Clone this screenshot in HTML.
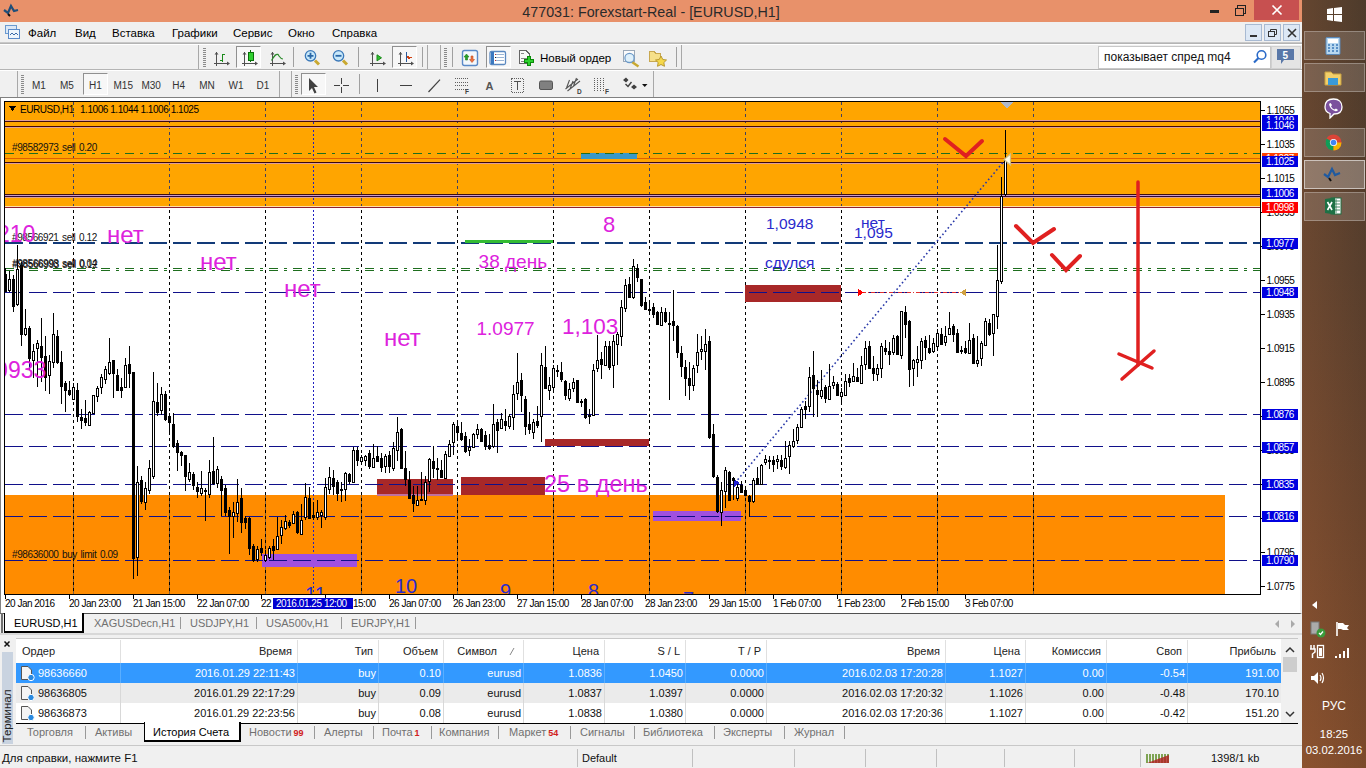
<!DOCTYPE html><html><head><meta charset="utf-8"><style>
*{margin:0;padding:0;box-sizing:border-box}
body{width:1366px;height:768px;overflow:hidden;background:#f0f0f0;font-family:"Liberation Sans",sans-serif;position:relative;color:#000}
.a{position:absolute}
.t{position:absolute;white-space:nowrap}
</style></head><body><div class="a" style="left:0;top:0;width:1302px;height:22px;background:#e8916a"></div>
<div class="t" style="left:0;top:1px;width:1302px;text-align:center;font-size:14.3px;line-height:22px;color:#2a2a2a">477031: Forexstart-Real - [EURUSD,H1]</div>
<svg class="a" style="left:2px;top:2px" width="18" height="16"><path d="M2 8 L6 11 L9 4 L12 9 L16 8" stroke="#1f4e79" stroke-width="2.2" fill="none"/><path d="M6 12 L8 14" stroke="#111" stroke-width="2"/></svg>
<div class="a" style="left:1210px;top:10px;width:9px;height:3px;background:#222"></div>
<svg class="a" style="left:1233px;top:3px" width="14" height="14" shape-rendering="crispEdges"><rect x="2.5" y="5.5" width="8" height="7" fill="none" stroke="#222" stroke-width="1.4"/><path d="M4.5 5 V2.5 H12.5 V10.5 H11" fill="none" stroke="#222" stroke-width="1.4"/></svg>
<div class="a" style="left:1254px;top:0;width:45px;height:20px;background:#c75050"></div>
<svg class="a" style="left:1271px;top:4px" width="12" height="12"><path d="M1.5 1.5 L10.5 10.5 M10.5 1.5 L1.5 10.5" stroke="#fff" stroke-width="1.7"/></svg>
<div class="a" style="left:0;top:22px;width:1302px;height:21px;background:#f0f0f0;border-bottom:1px solid #c8c8c8"></div>
<svg class="a" style="left:4px;top:24px" width="16" height="16"><rect x="1.5" y="1.5" width="11" height="8" fill="#dbe8f6" stroke="#6a9ad0"/><rect x="4.5" y="5.5" width="11" height="9" fill="#eef5fc" stroke="#5a8ac8"/><path d="M6 11 l2 -2 l2 2 l2 -2 l2 2" stroke="#3a6aa8" fill="none"/></svg>
<div class="t" style="left:28px;top:26px;font-size:11.5px;line-height:15px;color:#000">Файл</div>
<div class="t" style="left:75px;top:26px;font-size:11.5px;line-height:15px;color:#000">Вид</div>
<div class="t" style="left:112px;top:26px;font-size:11.5px;line-height:15px;color:#000">Вставка</div>
<div class="t" style="left:172px;top:26px;font-size:11.5px;line-height:15px;color:#000">Графики</div>
<div class="t" style="left:233px;top:26px;font-size:11.5px;line-height:15px;color:#000">Сервис</div>
<div class="t" style="left:288px;top:26px;font-size:11.5px;line-height:15px;color:#000">Окно</div>
<div class="t" style="left:332px;top:26px;font-size:11.5px;line-height:15px;color:#000">Справка</div>
<div class="a" style="left:1245px;top:24px;width:17px;height:17px;background:#dde8f5;border:1px solid #a8bad2"></div>
<div class="a" style="left:1264px;top:24px;width:17px;height:17px;background:#dde8f5;border:1px solid #a8bad2"></div>
<div class="a" style="left:1283px;top:24px;width:17px;height:17px;background:#dde8f5;border:1px solid #a8bad2"></div>
<div class="a" style="left:1250px;top:35px;width:7px;height:2px;background:#333"></div>
<svg class="a" style="left:1267px;top:27px" width="12" height="11"><rect x="1.5" y="4.5" width="6" height="5" fill="none" stroke="#333"/><path d="M3.5 4.5 V2.5 H9.5 V7.5 H7.5" fill="none" stroke="#333"/></svg>
<svg class="a" style="left:1287px;top:28px" width="10" height="10"><path d="M1 1 L9 9 M9 1 L1 9" stroke="#333" stroke-width="1.6"/></svg>
<div class="a" style="left:0;top:43px;width:1302px;height:55px;background:#f0f0f0"></div>
<div class="a" style="left:0;top:43px;width:1302px;height:1px;background:#b4b4b4"></div>
<div class="a" style="left:0;top:44px;width:1302px;height:1px;background:#fff"></div>
<div class="a" style="left:0;top:69px;width:1302px;height:1px;background:#b4b4b4"></div>
<div class="a" style="left:0;top:70px;width:1302px;height:1px;background:#fff"></div>
<div class="a" style="left:0;top:97px;width:1302px;height:2px;background:#808080"></div>
<div class="a" style="left:198px;top:45px;width:1px;height:24px;background:#a8a8a8"></div>
<div class="a" style="left:427px;top:45px;width:1px;height:24px;background:#a8a8a8"></div>
<div class="a" style="left:440px;top:45px;width:1px;height:24px;background:#a8a8a8"></div>
<div class="a" style="left:681px;top:45px;width:1px;height:24px;background:#a8a8a8"></div>
<div class="a" style="left:17px;top:71px;width:1px;height:26px;background:#a8a8a8"></div>
<div class="a" style="left:279px;top:71px;width:1px;height:26px;background:#a8a8a8"></div>
<div class="a" style="left:291px;top:71px;width:1px;height:26px;background:#a8a8a8"></div>
<div class="a" style="left:653px;top:71px;width:1px;height:26px;background:#a8a8a8"></div>
<div class="a" style="left:236px;top:46px;width:25px;height:22px;background:#f7f7f7;border-left:1px solid #909090;border-top:1px solid #909090;border-right:1px solid #fff;border-bottom:1px solid #fff"></div>
<div class="a" style="left:392px;top:46px;width:25px;height:22px;background:#f7f7f7;border-left:1px solid #909090;border-top:1px solid #909090;border-right:1px solid #fff;border-bottom:1px solid #fff"></div>
<div class="a" style="left:486px;top:46px;width:25px;height:22px;background:#f7f7f7;border-left:1px solid #909090;border-top:1px solid #909090;border-right:1px solid #fff;border-bottom:1px solid #fff"></div>
<div class="a" style="left:83px;top:73px;width:25px;height:22px;background:#f7f7f7;border-left:1px solid #909090;border-top:1px solid #909090;border-right:1px solid #fff;border-bottom:1px solid #fff"></div>
<div class="a" style="left:301px;top:73px;width:25px;height:22px;background:#f7f7f7;border-left:1px solid #909090;border-top:1px solid #909090;border-right:1px solid #fff;border-bottom:1px solid #fff"></div>
<div class="t" style="left:26.6px;top:80px;width:24.5px;text-align:center;font-size:10px;line-height:12px;color:#333">M1</div>
<div class="t" style="left:54.5px;top:80px;width:24.799999999999997px;text-align:center;font-size:10px;line-height:12px;color:#333">M5</div>
<div class="t" style="left:83.7px;top:80px;width:23.299999999999997px;text-align:center;font-size:10px;line-height:12px;color:#333">H1</div>
<div class="t" style="left:108.3px;top:80px;width:29.89999999999999px;text-align:center;font-size:10px;line-height:12px;color:#333">M15</div>
<div class="t" style="left:136.3px;top:80px;width:29.799999999999983px;text-align:center;font-size:10px;line-height:12px;color:#333">M30</div>
<div class="t" style="left:166.2px;top:80px;width:24.900000000000006px;text-align:center;font-size:10px;line-height:12px;color:#333">H4</div>
<div class="t" style="left:193.7px;top:80px;width:26.700000000000017px;text-align:center;font-size:10px;line-height:12px;color:#333">MN</div>
<div class="t" style="left:223px;top:80px;width:26px;text-align:center;font-size:10px;line-height:12px;color:#333">W1</div>
<div class="t" style="left:251px;top:80px;width:23.80000000000001px;text-align:center;font-size:10px;line-height:12px;color:#333">D1</div>
<div class="t" style="left:540px;top:50px;font-size:11.6px;line-height:15px;color:#000">Новый ордер</div>
<svg class="a" style="left:0;top:0" width="700" height="100" shape-rendering="crispEdges">
<rect x="203" y="48" width="3" height="1" fill="#8a8a8a"/>
<rect x="203" y="50" width="3" height="1" fill="#8a8a8a"/>
<rect x="203" y="52" width="3" height="1" fill="#8a8a8a"/>
<rect x="203" y="54" width="3" height="1" fill="#8a8a8a"/>
<rect x="203" y="56" width="3" height="1" fill="#8a8a8a"/>
<rect x="203" y="58" width="3" height="1" fill="#8a8a8a"/>
<rect x="203" y="60" width="3" height="1" fill="#8a8a8a"/>
<rect x="203" y="62" width="3" height="1" fill="#8a8a8a"/>
<rect x="203" y="64" width="3" height="1" fill="#8a8a8a"/>
<rect x="203" y="66" width="3" height="1" fill="#8a8a8a"/>
<rect x="444" y="48" width="3" height="1" fill="#8a8a8a"/>
<rect x="444" y="50" width="3" height="1" fill="#8a8a8a"/>
<rect x="444" y="52" width="3" height="1" fill="#8a8a8a"/>
<rect x="444" y="54" width="3" height="1" fill="#8a8a8a"/>
<rect x="444" y="56" width="3" height="1" fill="#8a8a8a"/>
<rect x="444" y="58" width="3" height="1" fill="#8a8a8a"/>
<rect x="444" y="60" width="3" height="1" fill="#8a8a8a"/>
<rect x="444" y="62" width="3" height="1" fill="#8a8a8a"/>
<rect x="444" y="64" width="3" height="1" fill="#8a8a8a"/>
<rect x="444" y="66" width="3" height="1" fill="#8a8a8a"/>
<rect x="21" y="75" width="3" height="1" fill="#8a8a8a"/>
<rect x="21" y="77" width="3" height="1" fill="#8a8a8a"/>
<rect x="21" y="79" width="3" height="1" fill="#8a8a8a"/>
<rect x="21" y="81" width="3" height="1" fill="#8a8a8a"/>
<rect x="21" y="83" width="3" height="1" fill="#8a8a8a"/>
<rect x="21" y="85" width="3" height="1" fill="#8a8a8a"/>
<rect x="21" y="87" width="3" height="1" fill="#8a8a8a"/>
<rect x="21" y="89" width="3" height="1" fill="#8a8a8a"/>
<rect x="21" y="91" width="3" height="1" fill="#8a8a8a"/>
<rect x="21" y="93" width="3" height="1" fill="#8a8a8a"/>
<rect x="295" y="75" width="3" height="1" fill="#8a8a8a"/>
<rect x="295" y="77" width="3" height="1" fill="#8a8a8a"/>
<rect x="295" y="79" width="3" height="1" fill="#8a8a8a"/>
<rect x="295" y="81" width="3" height="1" fill="#8a8a8a"/>
<rect x="295" y="83" width="3" height="1" fill="#8a8a8a"/>
<rect x="295" y="85" width="3" height="1" fill="#8a8a8a"/>
<rect x="295" y="87" width="3" height="1" fill="#8a8a8a"/>
<rect x="295" y="89" width="3" height="1" fill="#8a8a8a"/>
<rect x="295" y="91" width="3" height="1" fill="#8a8a8a"/>
<rect x="295" y="93" width="3" height="1" fill="#8a8a8a"/>
<line x1="293.5" y1="47" x2="293.5" y2="67" stroke="#a0a0a0"/>
<line x1="358.5" y1="47" x2="358.5" y2="67" stroke="#a0a0a0"/>
<line x1="422.5" y1="47" x2="422.5" y2="67" stroke="#a0a0a0"/>
<line x1="452.5" y1="47" x2="452.5" y2="67" stroke="#a0a0a0"/>
<line x1="676.5" y1="47" x2="676.5" y2="67" stroke="#a0a0a0"/>
<line x1="359.5" y1="74" x2="359.5" y2="94" stroke="#a0a0a0"/>
<path d="M216.5 52 V66 M214 63.5 H229" stroke="#505050" stroke-width="1.2"/>
<path d="M214.5 54.5 L216.5 52 L218.5 54.5 Z M227 61.5 L230 63.5 L227 65.5 Z" fill="#505050" shape-rendering="auto"/>
<path d="M244.5 52 V66 M242 63.5 H257" stroke="#505050" stroke-width="1.2"/>
<path d="M242.5 54.5 L244.5 52 L246.5 54.5 Z M255 61.5 L258 63.5 L255 65.5 Z" fill="#505050" shape-rendering="auto"/>
<path d="M272.5 52 V66 M270 63.5 H285" stroke="#505050" stroke-width="1.2"/>
<path d="M270.5 54.5 L272.5 52 L274.5 54.5 Z M283 61.5 L286 63.5 L283 65.5 Z" fill="#505050" shape-rendering="auto"/>
<path d="M372.5 52 V66 M370 63.5 H385" stroke="#505050" stroke-width="1.2"/>
<path d="M370.5 54.5 L372.5 52 L374.5 54.5 Z M383 61.5 L386 63.5 L383 65.5 Z" fill="#505050" shape-rendering="auto"/>
<path d="M400.5 52 V66 M398 63.5 H413" stroke="#505050" stroke-width="1.2"/>
<path d="M398.5 54.5 L400.5 52 L402.5 54.5 Z M411 61.5 L414 63.5 L411 65.5 Z" fill="#505050" shape-rendering="auto"/>
<path d="M222.5 53.5 V61.5 M222 54.5 H225 M220 60.5 H222.5" stroke="#1a8a1a" stroke-width="1.3"/>
<rect x="248" y="52" width="5" height="8" fill="#30d030" stroke="#0a700a"/><path d="M250.5 50 V52 M250.5 60 V62" stroke="#0a700a"/>
<path d="M271.5 60.5 Q277 51 279 56 Q281 59 283 59" stroke="#2a8a2a" stroke-width="1.2" fill="none" shape-rendering="auto"/>
<line x1="315.0" y1="60.5" x2="319.0" y2="64.5" stroke="#c8a830" stroke-width="3" shape-rendering="auto"/>
<circle cx="310.5" cy="55.8" r="5.2" fill="#c8e8fa" stroke="#3a78b8" stroke-width="1.3" shape-rendering="auto"/>
<path d="M307.5 55.8 H313.5 M310.5 52.8 V58.8" stroke="#2a68a8" stroke-width="1.8" shape-rendering="auto"/>
<line x1="343.0" y1="60.5" x2="347.0" y2="64.5" stroke="#c8a830" stroke-width="3" shape-rendering="auto"/>
<circle cx="338.5" cy="55.8" r="5.2" fill="#c8e8fa" stroke="#3a78b8" stroke-width="1.3" shape-rendering="auto"/>
<path d="M335.5 55.8 H341.5" stroke="#2a68a8" stroke-width="1.8" shape-rendering="auto"/>
<path d="M377 54.8 L381.5 57.8 L377 60.9 Z" fill="#30c030" stroke="#1a8a1a" shape-rendering="auto"/>
<path d="M406.5 52 V61.5" stroke="#2a5a9a" stroke-width="1.3"/><path d="M411.8 57.3 H408 M409.5 55.5 L407.5 57.3 L409.5 59" stroke="#d04010" stroke-width="1.3" fill="none"/>
<rect x="462.5" y="50.5" width="15" height="15" rx="2" fill="#f4f8fc" stroke="#5a8ac8" stroke-width="1.4" shape-rendering="auto"/>
<path d="M466.5 54 L464 57 H465.5 V60 H467.5 V57 H469 Z" fill="#2aa02a" stroke="#1a801a" stroke-width=".6" shape-rendering="auto"/><path d="M472 62.5 L474.5 59.5 H473 V56 H471 V59.5 H469.5 Z" fill="#f07040" stroke="#c05020" stroke-width=".6" shape-rendering="auto"/>
<rect x="490" y="51.5" width="15.5" height="13" rx="1.5" fill="#fff" stroke="#5a88c0" stroke-width="1.3" shape-rendering="auto"/><rect x="490.5" y="52" width="3" height="12" fill="#3a78c0"/>
<path d="M495 54.5 H504 M495 57.5 H504 M495 60.5 H504" stroke="#9ab4d4"/><rect x="495" y="54" width="1" height="1" fill="#c03030"/><rect x="495" y="57" width="1" height="1" fill="#222"/><rect x="495" y="60" width="1" height="1" fill="#c03030"/>
<path d="M519.5 50.5 H526 L529.5 54 V63.5 H519.5 Z" fill="#fafafa" stroke="#666"/><path d="M521 53.5 H524 M521 58.5 H527 M521 61 H525" stroke="#888"/>
<path d="M527.5 56.5 H530.5 V59.5 H533.5 V62.5 H530.5 V65.5 H527.5 V62.5 H524.5 V59.5 H527.5 Z" fill="#2ed02e" stroke="#0a8a0a"/>
<rect x="623.5" y="50.5" width="11" height="11" fill="#fbfbfb" stroke="#9aa8b8"/><line x1="632" y1="62" x2="638.5" y2="66.5" stroke="#c8a830" stroke-width="2.4" shape-rendering="auto"/><circle cx="629.5" cy="58" r="4.6" fill="#d8eefa" fill-opacity=".8" stroke="#6a98c8" stroke-width="1.2" shape-rendering="auto"/>
<path d="M649.5 51.5 H654 L655.5 53 H660.5 V61.5 H649.5 Z" fill="#f6e08a" stroke="#c8a850"/><path d="M661 56 L662.8 59.5 L666.5 60 L663.8 62.6 L664.5 66.3 L661 64.5 L657.5 66.3 L658.2 62.6 L655.5 60 L659.2 59.5 Z" fill="#f5d84a" stroke="#b89830" shape-rendering="auto"/>
<path d="M309 78 V91 L312 88 L314.5 93.5 L316.5 92.5 L314 87 H318 Z" fill="#404040" shape-rendering="auto"/>
<path d="M341.5 78 V83.5 M341.5 87 V93 M334 85.5 H340 M343 85.5 H349" stroke="#404040" stroke-width="1.2"/>
<path d="M377.5 79 V92" stroke="#404040" stroke-width="1.2"/><path d="M400 85.5 H412" stroke="#404040" stroke-width="1.2"/><path d="M428.5 92 L440 79.7" stroke="#404040" stroke-width="1.2" shape-rendering="auto"/>
<path d="M454.5 78.5 H468" stroke="#606060" stroke-dasharray="1 1"/>
<path d="M454.5 82.5 H468" stroke="#606060" stroke-dasharray="1 1"/>
<path d="M454.5 85.5 H468" stroke="#606060" stroke-dasharray="1 1"/>
<path d="M454.5 89.5 H468" stroke="#606060" stroke-dasharray="1 1"/>
<text x="465" y="94" font-size="6.5" font-weight="bold" fill="#404040" font-family="Liberation Sans" shape-rendering="auto">F</text>
<text x="485.5" y="90" font-size="11" font-weight="bold" fill="#555" font-family="Liberation Sans" shape-rendering="auto">A</text>
<rect x="511.5" y="78.5" width="12" height="13.5" fill="none" stroke="#606060" stroke-dasharray="1 1"/><path d="M514 81.5 H521 M517.5 81.5 V90" stroke="#505050" stroke-width="1.8"/>
<rect x="539.5" y="81" width="13" height="8.5" rx="1.5" fill="#808080" stroke="#555" shape-rendering="auto"/>
<path d="M565.5 89 L578 79 M567.5 91 L580 81 M569.5 80 L566.5 88 M573 81 L570 89 M576.5 78 L573.5 86" stroke="#555" stroke-width="1.1" fill="none" shape-rendering="auto"/>
<text x="577" y="94" font-size="6.5" font-weight="bold" fill="#404040" font-family="Liberation Sans" shape-rendering="auto">D</text>
<path d="M594.5 78 V91" stroke="#606060" stroke-dasharray="1 1"/>
<path d="M597.5 78 V91" stroke="#606060" stroke-dasharray="1 1"/>
<path d="M600.5 78 V91" stroke="#606060" stroke-dasharray="1 1"/>
<path d="M603.5 78 V91" stroke="#606060" stroke-dasharray="1 1"/>
<text x="605" y="94" font-size="6.5" font-weight="bold" fill="#404040" font-family="Liberation Sans" shape-rendering="auto">F</text>
<path d="M623 80 L626 77.5 L628.5 80 L626 82.5 Z M631 87 L634 84.5 L637 87 L634 89.5 Z" fill="#404040" shape-rendering="auto"/><path d="M625.5 84 L628 86.5 L631.5 82" stroke="#404040" stroke-width="1.4" fill="none" shape-rendering="auto"/>
<path d="M642 84 H647.5 L644.75 87 Z" fill="#111" shape-rendering="auto"/>
</svg>
<div class="a" style="left:1098px;top:46px;width:173px;height:23px;background:#fff;border:1px solid #c8c8c8"></div>
<div class="t" style="left:1104px;top:50px;font-size:12px;line-height:15px;color:#111">показывает спред mq4</div>
<svg class="a" style="left:1252px;top:49px" width="16" height="16"><circle cx="9.5" cy="6" r="4.3" fill="none" stroke="#2a6ac8" stroke-width="1.6"/><path d="M6.5 9 L2 13.5" stroke="#2a6ac8" stroke-width="2.2"/></svg>
<div class="a" style="left:1271px;top:46px;width:30px;height:23px;background:#e4e4e4;border:1px solid #d0d0d0"></div>
<svg class="a" style="left:1276px;top:48px" width="20" height="18"><path d="M1 1 H18 V12 H8 L5 16 V12 H1 Z" fill="#5a78a8"/><text x="6.5" y="11" font-size="10" font-weight="bold" fill="#fff" font-family="Liberation Sans">5</text></svg>
<div class="a" style="left:0;top:98px;width:1302px;height:516px;background:#fff;border-left:1px solid #808080;border-right:2px solid #f0f0f0;border-bottom:1px solid #505050"></div>
<svg class="a" style="left:0;top:0" width="1302" height="614" shape-rendering="crispEdges" font-family="Liberation Sans">
<defs><clipPath id="cc"><rect x="5" y="102" width="1255" height="492"/></clipPath></defs>
<rect x="4.5" y="101.5" width="1256" height="493" fill="#fff" stroke="#000"/>
<g clip-path="url(#cc)">
<rect x="5" y="102" width="1255" height="105" fill="#ffa500"/>
<rect x="5" y="495" width="1220" height="99" fill="#ff8c00"/>
<line x1="73.5" y1="102" x2="73.5" y2="594" stroke="#000" stroke-dasharray="3 3"/>
<line x1="73.5" y1="495" x2="73.5" y2="594" stroke="#806040" stroke-dasharray="3 3"/>
<line x1="73.5" y1="102" x2="73.5" y2="207" stroke="#404060" stroke-dasharray="3 3"/>
<line x1="169.5" y1="102" x2="169.5" y2="594" stroke="#000" stroke-dasharray="3 3"/>
<line x1="169.5" y1="495" x2="169.5" y2="594" stroke="#806040" stroke-dasharray="3 3"/>
<line x1="169.5" y1="102" x2="169.5" y2="207" stroke="#404060" stroke-dasharray="3 3"/>
<line x1="265.5" y1="102" x2="265.5" y2="594" stroke="#000" stroke-dasharray="3 3"/>
<line x1="265.5" y1="495" x2="265.5" y2="594" stroke="#806040" stroke-dasharray="3 3"/>
<line x1="265.5" y1="102" x2="265.5" y2="207" stroke="#404060" stroke-dasharray="3 3"/>
<line x1="361.5" y1="102" x2="361.5" y2="594" stroke="#000" stroke-dasharray="3 3"/>
<line x1="361.5" y1="495" x2="361.5" y2="594" stroke="#806040" stroke-dasharray="3 3"/>
<line x1="361.5" y1="102" x2="361.5" y2="207" stroke="#404060" stroke-dasharray="3 3"/>
<line x1="457.5" y1="102" x2="457.5" y2="594" stroke="#000" stroke-dasharray="3 3"/>
<line x1="457.5" y1="495" x2="457.5" y2="594" stroke="#806040" stroke-dasharray="3 3"/>
<line x1="457.5" y1="102" x2="457.5" y2="207" stroke="#404060" stroke-dasharray="3 3"/>
<line x1="553.5" y1="102" x2="553.5" y2="594" stroke="#000" stroke-dasharray="3 3"/>
<line x1="553.5" y1="495" x2="553.5" y2="594" stroke="#806040" stroke-dasharray="3 3"/>
<line x1="553.5" y1="102" x2="553.5" y2="207" stroke="#404060" stroke-dasharray="3 3"/>
<line x1="649.5" y1="102" x2="649.5" y2="594" stroke="#000" stroke-dasharray="3 3"/>
<line x1="649.5" y1="495" x2="649.5" y2="594" stroke="#806040" stroke-dasharray="3 3"/>
<line x1="649.5" y1="102" x2="649.5" y2="207" stroke="#404060" stroke-dasharray="3 3"/>
<line x1="745.5" y1="102" x2="745.5" y2="594" stroke="#000" stroke-dasharray="3 3"/>
<line x1="745.5" y1="495" x2="745.5" y2="594" stroke="#806040" stroke-dasharray="3 3"/>
<line x1="745.5" y1="102" x2="745.5" y2="207" stroke="#404060" stroke-dasharray="3 3"/>
<line x1="841.5" y1="102" x2="841.5" y2="594" stroke="#000" stroke-dasharray="3 3"/>
<line x1="841.5" y1="495" x2="841.5" y2="594" stroke="#806040" stroke-dasharray="3 3"/>
<line x1="841.5" y1="102" x2="841.5" y2="207" stroke="#404060" stroke-dasharray="3 3"/>
<line x1="937.5" y1="102" x2="937.5" y2="594" stroke="#000" stroke-dasharray="3 3"/>
<line x1="937.5" y1="495" x2="937.5" y2="594" stroke="#806040" stroke-dasharray="3 3"/>
<line x1="937.5" y1="102" x2="937.5" y2="207" stroke="#404060" stroke-dasharray="3 3"/>
<line x1="1033.5" y1="102" x2="1033.5" y2="594" stroke="#000" stroke-dasharray="3 3"/>
<line x1="1033.5" y1="495" x2="1033.5" y2="594" stroke="#806040" stroke-dasharray="3 3"/>
<line x1="1033.5" y1="102" x2="1033.5" y2="207" stroke="#404060" stroke-dasharray="3 3"/>
<line x1="313.5" y1="102" x2="313.5" y2="594" stroke="#2020c0" stroke-dasharray="2 2"/>
<line x1="5" y1="120.5" x2="1260" y2="120.5" stroke="#e0a098"/>
<line x1="5" y1="121.5" x2="1260" y2="121.5" stroke="#400810"/>
<line x1="5" y1="126.5" x2="1260" y2="126.5" stroke="#400810"/>
<line x1="5" y1="127.5" x2="1260" y2="127.5" stroke="#e0a098"/>
<line x1="5" y1="158.5" x2="1260" y2="158.5" stroke="#e06000"/>
<line x1="5" y1="162.5" x2="1260" y2="162.5" stroke="#380810"/>
<line x1="5" y1="163.5" x2="1260" y2="163.5" stroke="#e0a098"/>
<line x1="5" y1="194.5" x2="1260" y2="194.5" stroke="#401010"/>
<line x1="5" y1="195.5" x2="1260" y2="195.5" stroke="#c898c8"/>
<line x1="5" y1="196.5" x2="1260" y2="196.5" stroke="#300838"/>
<line x1="5" y1="197.5" x2="1260" y2="197.5" stroke="#e0a090"/>
<line x1="5" y1="206.5" x2="1260" y2="206.5" stroke="#ffe0a8"/>
<line x1="5" y1="207.5" x2="1260" y2="207.5" stroke="#902030"/>
<rect x="581" y="153" width="56" height="6" fill="#3a98c8"/>
<rect x="745" y="285" width="96" height="17" fill="#a82828"/>
<rect x="377" y="479" width="76" height="17" fill="#a82828"/><rect x="377" y="494" width="76" height="2" fill="#c070a0"/>
<rect x="461" y="477" width="84" height="18" fill="#a82828"/>
<rect x="545" y="439" width="104" height="7" fill="#a82828"/>
<rect x="653" y="511" width="88" height="10" fill="#a050e0"/>
<rect x="262" y="554" width="95" height="13" fill="#a050e0"/>
<line x1="5" y1="153.5" x2="1260" y2="153.5" stroke="#1e6e1e" stroke-dasharray="9 6 3 6"/>
<line x1="5" y1="243" x2="1260" y2="243" stroke="#123a78" stroke-width="2" stroke-dasharray="18 6"/>
<rect x="465" y="240" width="88" height="3" fill="#33bb33"/>
<line x1="5" y1="268.5" x2="1260" y2="268.5" stroke="#1e6e1e" stroke-dasharray="9 6 3 6"/>
<line x1="5" y1="270.5" x2="1260" y2="270.5" stroke="#1e6e1e" stroke-dasharray="9 6 3 6"/>
<line x1="5" y1="292.5" x2="1260" y2="292.5" stroke="#10108a" stroke-dasharray="18 6"/>
<line x1="5" y1="414.5" x2="1260" y2="414.5" stroke="#10108a" stroke-dasharray="18 6"/>
<line x1="5" y1="446.5" x2="1260" y2="446.5" stroke="#10108a" stroke-dasharray="18 6"/>
<line x1="5" y1="484.5" x2="1260" y2="484.5" stroke="#10108a" stroke-dasharray="18 6"/>
<line x1="5" y1="516.5" x2="1260" y2="516.5" stroke="#10108a" stroke-dasharray="18 6"/>
<line x1="5" y1="560.5" x2="1260" y2="560.5" stroke="#10108a" stroke-dasharray="18 6"/>
<line x1="862" y1="292.5" x2="962" y2="292.5" stroke="#e03030" stroke-dasharray="4 2 1 2"/>
<path d="M858 289 L864 292.5 L858 296 Z" fill="#ff0000"/><path d="M966 289 L960 292.5 L966 296 Z" fill="#d0a040"/>
<line x1="735" y1="483" x2="1005" y2="160" stroke="#2838a8" stroke-width="1.6" stroke-dasharray="1.6 2.6" shape-rendering="auto"/>
<path d="M733 478 L740 483 L733 488 Z" fill="#2020d0"/>
<line x1="5.5" y1="268" x2="5.5" y2="291" stroke="#000"/>
<rect x="4" y="274" width="3" height="18" fill="#000"/>
<line x1="9.5" y1="271" x2="9.5" y2="292" stroke="#000"/>
<rect x="8.5" y="279.5" width="2" height="11" fill="#fff" stroke="#000"/>
<line x1="13.5" y1="275" x2="13.5" y2="312" stroke="#000"/>
<rect x="12" y="279" width="3" height="28" fill="#000"/>
<line x1="17.5" y1="245" x2="17.5" y2="306" stroke="#000"/>
<rect x="16.5" y="269.5" width="2" height="35" fill="#fff" stroke="#000"/>
<line x1="21.5" y1="262" x2="21.5" y2="346" stroke="#000"/>
<rect x="20" y="265" width="3" height="70" fill="#000"/>
<line x1="25.5" y1="309" x2="25.5" y2="336" stroke="#000"/>
<rect x="24.5" y="328.5" width="2" height="6" fill="#fff" stroke="#000"/>
<line x1="29.5" y1="326" x2="29.5" y2="370" stroke="#000"/>
<rect x="28" y="328" width="3" height="31" fill="#000"/>
<line x1="33.5" y1="344" x2="33.5" y2="378" stroke="#000"/>
<rect x="32.5" y="351.5" width="2" height="9" fill="#fff" stroke="#000"/>
<line x1="37.5" y1="340" x2="37.5" y2="387" stroke="#000"/>
<rect x="36.5" y="343.5" width="2" height="5" fill="#fff" stroke="#000"/>
<line x1="41.5" y1="318" x2="41.5" y2="382" stroke="#000"/>
<rect x="40" y="346" width="3" height="12" fill="#000"/>
<line x1="45.5" y1="336" x2="45.5" y2="391" stroke="#000"/>
<rect x="44" y="356" width="3" height="22" fill="#000"/>
<line x1="49.5" y1="355" x2="49.5" y2="394" stroke="#000"/>
<rect x="48.5" y="361.5" width="2" height="14" fill="#fff" stroke="#000"/>
<line x1="53.5" y1="313" x2="53.5" y2="368" stroke="#000"/>
<rect x="52.5" y="334.5" width="2" height="28" fill="#fff" stroke="#000"/>
<line x1="57.5" y1="330" x2="57.5" y2="364" stroke="#000"/>
<rect x="56" y="336" width="3" height="27" fill="#000"/>
<line x1="61.5" y1="351" x2="61.5" y2="404" stroke="#000"/>
<rect x="60" y="362" width="3" height="25" fill="#000"/>
<line x1="65.5" y1="381" x2="65.5" y2="412" stroke="#000"/>
<rect x="64" y="383" width="3" height="8" fill="#000"/>
<line x1="69.5" y1="381" x2="69.5" y2="396" stroke="#000"/>
<rect x="68" y="390" width="3" height="5" fill="#000"/>
<line x1="73.5" y1="383" x2="73.5" y2="400" stroke="#000"/>
<rect x="72.5" y="387.5" width="2" height="12" fill="#fff" stroke="#000"/>
<line x1="77.5" y1="383" x2="77.5" y2="422" stroke="#000"/>
<rect x="76" y="390" width="3" height="27" fill="#000"/>
<line x1="81.5" y1="409" x2="81.5" y2="429" stroke="#000"/>
<rect x="80" y="417" width="3" height="4" fill="#000"/>
<line x1="85.5" y1="400" x2="85.5" y2="426" stroke="#000"/>
<rect x="84" y="418" width="3" height="5" fill="#000"/>
<line x1="89.5" y1="411" x2="89.5" y2="426" stroke="#000"/>
<rect x="88.5" y="412.5" width="2" height="13" fill="#fff" stroke="#000"/>
<line x1="93.5" y1="395" x2="93.5" y2="414" stroke="#000"/>
<rect x="92.5" y="395.5" width="2" height="18" fill="#fff" stroke="#000"/>
<line x1="97.5" y1="386" x2="97.5" y2="402" stroke="#000"/>
<rect x="96.5" y="388.5" width="2" height="8" fill="#fff" stroke="#000"/>
<line x1="101.5" y1="374" x2="101.5" y2="394" stroke="#000"/>
<rect x="100.5" y="377.5" width="2" height="10" fill="#fff" stroke="#000"/>
<line x1="105.5" y1="366" x2="105.5" y2="384" stroke="#000"/>
<rect x="104.5" y="369.5" width="2" height="10" fill="#fff" stroke="#000"/>
<line x1="109.5" y1="338" x2="109.5" y2="375" stroke="#000"/>
<rect x="108.5" y="362.5" width="2" height="11" fill="#fff" stroke="#000"/>
<line x1="113.5" y1="360" x2="113.5" y2="398" stroke="#000"/>
<rect x="112" y="360" width="3" height="14" fill="#000"/>
<line x1="117.5" y1="369" x2="117.5" y2="391" stroke="#000"/>
<rect x="116" y="375" width="3" height="16" fill="#000"/>
<line x1="121.5" y1="378" x2="121.5" y2="398" stroke="#000"/>
<rect x="120" y="387" width="3" height="4" fill="#000"/>
<line x1="125.5" y1="358" x2="125.5" y2="388" stroke="#000"/>
<rect x="124.5" y="365.5" width="2" height="22" fill="#fff" stroke="#000"/>
<line x1="129.5" y1="346" x2="129.5" y2="388" stroke="#000"/>
<rect x="128" y="364" width="3" height="10" fill="#000"/>
<line x1="133.5" y1="372" x2="133.5" y2="579" stroke="#000"/>
<rect x="132" y="372" width="3" height="187" fill="#000"/>
<line x1="137.5" y1="466" x2="137.5" y2="576" stroke="#000"/>
<rect x="136.5" y="482.5" width="2" height="75" fill="#fff" stroke="#000"/>
<line x1="141.5" y1="476" x2="141.5" y2="504" stroke="#000"/>
<rect x="140" y="480" width="3" height="22" fill="#000"/>
<line x1="145.5" y1="482" x2="145.5" y2="510" stroke="#000"/>
<rect x="144.5" y="488.5" width="2" height="14" fill="#fff" stroke="#000"/>
<line x1="149.5" y1="460" x2="149.5" y2="494" stroke="#000"/>
<rect x="148.5" y="468.5" width="2" height="22" fill="#fff" stroke="#000"/>
<line x1="153.5" y1="372" x2="153.5" y2="479" stroke="#000"/>
<rect x="152.5" y="401.5" width="2" height="75" fill="#fff" stroke="#000"/>
<line x1="157.5" y1="383" x2="157.5" y2="416" stroke="#000"/>
<rect x="156" y="402" width="3" height="11" fill="#000"/>
<line x1="161.5" y1="387" x2="161.5" y2="415" stroke="#000"/>
<rect x="160.5" y="394.5" width="2" height="16" fill="#fff" stroke="#000"/>
<line x1="165.5" y1="391" x2="165.5" y2="421" stroke="#000"/>
<rect x="164" y="394" width="3" height="26" fill="#000"/>
<line x1="169.5" y1="413" x2="169.5" y2="433" stroke="#000"/>
<rect x="168" y="416" width="3" height="7" fill="#000"/>
<line x1="173.5" y1="413" x2="173.5" y2="448" stroke="#000"/>
<rect x="172" y="424" width="3" height="23" fill="#000"/>
<line x1="177.5" y1="440" x2="177.5" y2="471" stroke="#000"/>
<rect x="176" y="443" width="3" height="10" fill="#000"/>
<line x1="181.5" y1="451" x2="181.5" y2="466" stroke="#000"/>
<rect x="180" y="452" width="3" height="4" fill="#000"/>
<line x1="185.5" y1="455" x2="185.5" y2="491" stroke="#000"/>
<rect x="184" y="455" width="3" height="22" fill="#000"/>
<line x1="189.5" y1="463" x2="189.5" y2="482" stroke="#000"/>
<rect x="188.5" y="472.5" width="2" height="7" fill="#fff" stroke="#000"/>
<line x1="193.5" y1="472" x2="193.5" y2="490" stroke="#000"/>
<rect x="192" y="474" width="3" height="12" fill="#000"/>
<line x1="197.5" y1="482" x2="197.5" y2="498" stroke="#000"/>
<rect x="196" y="487" width="3" height="5" fill="#000"/>
<line x1="201.5" y1="471" x2="201.5" y2="496" stroke="#000"/>
<rect x="200.5" y="488.5" width="2" height="5" fill="#fff" stroke="#000"/>
<line x1="205.5" y1="488" x2="205.5" y2="521" stroke="#000"/>
<rect x="204" y="490" width="3" height="2" fill="#000"/>
<line x1="209.5" y1="460" x2="209.5" y2="498" stroke="#000"/>
<rect x="208.5" y="472.5" width="2" height="22" fill="#fff" stroke="#000"/>
<line x1="213.5" y1="437" x2="213.5" y2="485" stroke="#000"/>
<rect x="212" y="471" width="3" height="13" fill="#000"/>
<line x1="217.5" y1="466" x2="217.5" y2="488" stroke="#000"/>
<rect x="216.5" y="469.5" width="2" height="14" fill="#fff" stroke="#000"/>
<line x1="221.5" y1="476" x2="221.5" y2="516" stroke="#000"/>
<rect x="220" y="479" width="3" height="12" fill="#000"/>
<line x1="225.5" y1="485" x2="225.5" y2="516" stroke="#000"/>
<rect x="224" y="488" width="3" height="25" fill="#000"/>
<line x1="229.5" y1="507" x2="229.5" y2="554" stroke="#000"/>
<rect x="228" y="510" width="3" height="7" fill="#000"/>
<line x1="233.5" y1="502" x2="233.5" y2="538" stroke="#000"/>
<rect x="232.5" y="512.5" width="2" height="4" fill="#fff" stroke="#000"/>
<line x1="237.5" y1="479" x2="237.5" y2="522" stroke="#000"/>
<rect x="236.5" y="502.5" width="2" height="11" fill="#fff" stroke="#000"/>
<line x1="241.5" y1="488" x2="241.5" y2="533" stroke="#000"/>
<rect x="240" y="498" width="3" height="25" fill="#000"/>
<line x1="245.5" y1="516" x2="245.5" y2="529" stroke="#000"/>
<rect x="244" y="518" width="3" height="5" fill="#000"/>
<line x1="249.5" y1="517" x2="249.5" y2="555" stroke="#000"/>
<rect x="248" y="518" width="3" height="31" fill="#000"/>
<line x1="253.5" y1="544" x2="253.5" y2="562" stroke="#000"/>
<rect x="252" y="546" width="3" height="15" fill="#000"/>
<line x1="257.5" y1="546" x2="257.5" y2="562" stroke="#000"/>
<rect x="256.5" y="549.5" width="2" height="10" fill="#fff" stroke="#000"/>
<line x1="261.5" y1="539" x2="261.5" y2="556" stroke="#000"/>
<rect x="260" y="548" width="3" height="5" fill="#000"/>
<line x1="265.5" y1="550" x2="265.5" y2="562" stroke="#000"/>
<rect x="264.5" y="555.5" width="2" height="5" fill="#fff" stroke="#000"/>
<line x1="269.5" y1="546" x2="269.5" y2="559" stroke="#000"/>
<rect x="268.5" y="548.5" width="2" height="9" fill="#fff" stroke="#000"/>
<line x1="273.5" y1="539" x2="273.5" y2="560" stroke="#000"/>
<rect x="272" y="546" width="3" height="5" fill="#000"/>
<line x1="277.5" y1="517" x2="277.5" y2="550" stroke="#000"/>
<rect x="276.5" y="536.5" width="2" height="13" fill="#fff" stroke="#000"/>
<line x1="281.5" y1="520" x2="281.5" y2="544" stroke="#000"/>
<rect x="280.5" y="527.5" width="2" height="8" fill="#fff" stroke="#000"/>
<line x1="285.5" y1="515" x2="285.5" y2="530" stroke="#000"/>
<rect x="284.5" y="521.5" width="2" height="7" fill="#fff" stroke="#000"/>
<line x1="289.5" y1="520" x2="289.5" y2="528" stroke="#000"/>
<rect x="288" y="522" width="3" height="4" fill="#000"/>
<line x1="293.5" y1="511" x2="293.5" y2="524" stroke="#000"/>
<rect x="292.5" y="514.5" width="2" height="9" fill="#fff" stroke="#000"/>
<line x1="297.5" y1="511" x2="297.5" y2="534" stroke="#000"/>
<rect x="296" y="512" width="3" height="21" fill="#000"/>
<line x1="301.5" y1="504" x2="301.5" y2="535" stroke="#000"/>
<rect x="300.5" y="520.5" width="2" height="14" fill="#fff" stroke="#000"/>
<line x1="305.5" y1="483" x2="305.5" y2="520" stroke="#000"/>
<rect x="304.5" y="497.5" width="2" height="20" fill="#fff" stroke="#000"/>
<line x1="309.5" y1="487" x2="309.5" y2="518" stroke="#000"/>
<rect x="308" y="498" width="3" height="21" fill="#000"/>
<line x1="313.5" y1="502" x2="313.5" y2="520" stroke="#000"/>
<rect x="312" y="515" width="3" height="3" fill="#000"/>
<line x1="317.5" y1="500" x2="317.5" y2="520" stroke="#000"/>
<rect x="316.5" y="512.5" width="2" height="5" fill="#fff" stroke="#000"/>
<line x1="321.5" y1="510" x2="321.5" y2="528" stroke="#000"/>
<rect x="320.5" y="512.5" width="2" height="3" fill="#fff" stroke="#000"/>
<line x1="325.5" y1="478" x2="325.5" y2="520" stroke="#000"/>
<rect x="324.5" y="487.5" width="2" height="30" fill="#fff" stroke="#000"/>
<line x1="329.5" y1="467" x2="329.5" y2="494" stroke="#000"/>
<rect x="328.5" y="477.5" width="2" height="12" fill="#fff" stroke="#000"/>
<line x1="333.5" y1="470" x2="333.5" y2="495" stroke="#000"/>
<rect x="332" y="478" width="3" height="9" fill="#000"/>
<line x1="337.5" y1="480" x2="337.5" y2="501" stroke="#000"/>
<rect x="336" y="482" width="3" height="12" fill="#000"/>
<line x1="341.5" y1="482" x2="341.5" y2="502" stroke="#000"/>
<rect x="340" y="489" width="3" height="2" fill="#000"/>
<line x1="345.5" y1="472" x2="345.5" y2="501" stroke="#000"/>
<rect x="344.5" y="473.5" width="2" height="16" fill="#fff" stroke="#000"/>
<line x1="349.5" y1="473" x2="349.5" y2="484" stroke="#000"/>
<rect x="348" y="474" width="3" height="8" fill="#000"/>
<line x1="353.5" y1="447" x2="353.5" y2="483" stroke="#000"/>
<rect x="352.5" y="450.5" width="2" height="32" fill="#fff" stroke="#000"/>
<line x1="357.5" y1="447" x2="357.5" y2="466" stroke="#000"/>
<rect x="356" y="450" width="3" height="11" fill="#000"/>
<line x1="361.5" y1="455" x2="361.5" y2="464" stroke="#000"/>
<rect x="360.5" y="457.5" width="2" height="4" fill="#fff" stroke="#000"/>
<line x1="365.5" y1="455" x2="365.5" y2="466" stroke="#000"/>
<rect x="364.5" y="456.5" width="2" height="4" fill="#fff" stroke="#000"/>
<line x1="369.5" y1="450" x2="369.5" y2="469" stroke="#000"/>
<rect x="368" y="453" width="3" height="14" fill="#000"/>
<line x1="373.5" y1="444" x2="373.5" y2="468" stroke="#000"/>
<rect x="372.5" y="458.5" width="2" height="9" fill="#fff" stroke="#000"/>
<line x1="377.5" y1="446" x2="377.5" y2="462" stroke="#000"/>
<rect x="376" y="456" width="3" height="6" fill="#000"/>
<line x1="381.5" y1="453" x2="381.5" y2="472" stroke="#000"/>
<rect x="380" y="458" width="3" height="10" fill="#000"/>
<line x1="385.5" y1="454" x2="385.5" y2="473" stroke="#000"/>
<rect x="384.5" y="456.5" width="2" height="10" fill="#fff" stroke="#000"/>
<line x1="389.5" y1="451" x2="389.5" y2="473" stroke="#000"/>
<rect x="388" y="455" width="3" height="12" fill="#000"/>
<line x1="393.5" y1="442" x2="393.5" y2="471" stroke="#000"/>
<rect x="392.5" y="448.5" width="2" height="20" fill="#fff" stroke="#000"/>
<line x1="397.5" y1="417" x2="397.5" y2="461" stroke="#000"/>
<rect x="396.5" y="432.5" width="2" height="18" fill="#fff" stroke="#000"/>
<line x1="401.5" y1="428" x2="401.5" y2="469" stroke="#000"/>
<rect x="400" y="429" width="3" height="40" fill="#000"/>
<line x1="405.5" y1="451" x2="405.5" y2="486" stroke="#000"/>
<rect x="404" y="468" width="3" height="12" fill="#000"/>
<line x1="409.5" y1="471" x2="409.5" y2="499" stroke="#000"/>
<rect x="408" y="480" width="3" height="19" fill="#000"/>
<line x1="413.5" y1="486" x2="413.5" y2="512" stroke="#000"/>
<rect x="412" y="495" width="3" height="9" fill="#000"/>
<line x1="417.5" y1="486" x2="417.5" y2="506" stroke="#000"/>
<rect x="416.5" y="500.5" width="2" height="5" fill="#fff" stroke="#000"/>
<line x1="421.5" y1="472" x2="421.5" y2="501" stroke="#000"/>
<rect x="420.5" y="499.5" width="2" height="1" fill="#fff" stroke="#000"/>
<line x1="425.5" y1="476" x2="425.5" y2="505" stroke="#000"/>
<rect x="424.5" y="482.5" width="2" height="18" fill="#fff" stroke="#000"/>
<line x1="429.5" y1="458" x2="429.5" y2="492" stroke="#000"/>
<rect x="428.5" y="459.5" width="2" height="22" fill="#fff" stroke="#000"/>
<line x1="433.5" y1="446" x2="433.5" y2="478" stroke="#000"/>
<rect x="432" y="461" width="3" height="8" fill="#000"/>
<line x1="437.5" y1="458" x2="437.5" y2="480" stroke="#000"/>
<rect x="436" y="468" width="3" height="2" fill="#000"/>
<line x1="441.5" y1="460" x2="441.5" y2="478" stroke="#000"/>
<rect x="440" y="470" width="3" height="8" fill="#000"/>
<line x1="445.5" y1="451" x2="445.5" y2="478" stroke="#000"/>
<rect x="444.5" y="454.5" width="2" height="24" fill="#fff" stroke="#000"/>
<line x1="449.5" y1="440" x2="449.5" y2="456" stroke="#000"/>
<rect x="448.5" y="444.5" width="2" height="12" fill="#fff" stroke="#000"/>
<line x1="453.5" y1="422" x2="453.5" y2="455" stroke="#000"/>
<rect x="452.5" y="424.5" width="2" height="18" fill="#fff" stroke="#000"/>
<line x1="457.5" y1="422" x2="457.5" y2="439" stroke="#000"/>
<rect x="456" y="426" width="3" height="7" fill="#000"/>
<line x1="461.5" y1="422" x2="461.5" y2="441" stroke="#000"/>
<rect x="460" y="433" width="3" height="7" fill="#000"/>
<line x1="465.5" y1="432" x2="465.5" y2="453" stroke="#000"/>
<rect x="464" y="436" width="3" height="16" fill="#000"/>
<line x1="469.5" y1="439" x2="469.5" y2="456" stroke="#000"/>
<rect x="468.5" y="447.5" width="2" height="3" fill="#fff" stroke="#000"/>
<line x1="473.5" y1="433" x2="473.5" y2="448" stroke="#000"/>
<rect x="472.5" y="434.5" width="2" height="13" fill="#fff" stroke="#000"/>
<line x1="477.5" y1="424" x2="477.5" y2="439" stroke="#000"/>
<rect x="476.5" y="429.5" width="2" height="5" fill="#fff" stroke="#000"/>
<line x1="481.5" y1="428" x2="481.5" y2="442" stroke="#000"/>
<rect x="480" y="429" width="3" height="13" fill="#000"/>
<line x1="485.5" y1="431" x2="485.5" y2="450" stroke="#000"/>
<rect x="484" y="435" width="3" height="12" fill="#000"/>
<line x1="489.5" y1="434" x2="489.5" y2="450" stroke="#000"/>
<rect x="488" y="445" width="3" height="4" fill="#000"/>
<line x1="493.5" y1="404" x2="493.5" y2="448" stroke="#000"/>
<rect x="492.5" y="424.5" width="2" height="22" fill="#fff" stroke="#000"/>
<line x1="497.5" y1="419" x2="497.5" y2="453" stroke="#000"/>
<rect x="496" y="422" width="3" height="9" fill="#000"/>
<line x1="501.5" y1="413" x2="501.5" y2="429" stroke="#000"/>
<rect x="500.5" y="419.5" width="2" height="9" fill="#fff" stroke="#000"/>
<line x1="505.5" y1="409" x2="505.5" y2="431" stroke="#000"/>
<rect x="504" y="421" width="3" height="5" fill="#000"/>
<line x1="509.5" y1="414" x2="509.5" y2="429" stroke="#000"/>
<rect x="508.5" y="416.5" width="2" height="10" fill="#fff" stroke="#000"/>
<line x1="513.5" y1="385" x2="513.5" y2="430" stroke="#000"/>
<rect x="512.5" y="394.5" width="2" height="23" fill="#fff" stroke="#000"/>
<line x1="517.5" y1="353" x2="517.5" y2="400" stroke="#000"/>
<rect x="516.5" y="382.5" width="2" height="11" fill="#fff" stroke="#000"/>
<line x1="521.5" y1="373" x2="521.5" y2="412" stroke="#000"/>
<rect x="520" y="380" width="3" height="16" fill="#000"/>
<line x1="525.5" y1="396" x2="525.5" y2="435" stroke="#000"/>
<rect x="524" y="399" width="3" height="28" fill="#000"/>
<line x1="529.5" y1="412" x2="529.5" y2="434" stroke="#000"/>
<rect x="528" y="424" width="3" height="6" fill="#000"/>
<line x1="533.5" y1="419" x2="533.5" y2="439" stroke="#000"/>
<rect x="532.5" y="422.5" width="2" height="10" fill="#fff" stroke="#000"/>
<line x1="537.5" y1="406" x2="537.5" y2="428" stroke="#000"/>
<rect x="536" y="421" width="3" height="5" fill="#000"/>
<line x1="541.5" y1="353" x2="541.5" y2="442" stroke="#000"/>
<rect x="540.5" y="365.5" width="2" height="51" fill="#fff" stroke="#000"/>
<line x1="545.5" y1="346" x2="545.5" y2="389" stroke="#000"/>
<rect x="544" y="367" width="3" height="22" fill="#000"/>
<line x1="549.5" y1="377" x2="549.5" y2="400" stroke="#000"/>
<rect x="548.5" y="385.5" width="2" height="5" fill="#fff" stroke="#000"/>
<line x1="553.5" y1="365" x2="553.5" y2="392" stroke="#000"/>
<rect x="552.5" y="368.5" width="2" height="19" fill="#fff" stroke="#000"/>
<line x1="557.5" y1="365" x2="557.5" y2="377" stroke="#000"/>
<rect x="556" y="370" width="3" height="2" fill="#000"/>
<line x1="561.5" y1="362" x2="561.5" y2="382" stroke="#000"/>
<rect x="560" y="372" width="3" height="8" fill="#000"/>
<line x1="565.5" y1="380" x2="565.5" y2="400" stroke="#000"/>
<rect x="564" y="381" width="3" height="15" fill="#000"/>
<line x1="569.5" y1="383" x2="569.5" y2="401" stroke="#000"/>
<rect x="568.5" y="389.5" width="2" height="9" fill="#fff" stroke="#000"/>
<line x1="573.5" y1="378" x2="573.5" y2="392" stroke="#000"/>
<rect x="572.5" y="382.5" width="2" height="6" fill="#fff" stroke="#000"/>
<line x1="577.5" y1="380" x2="577.5" y2="402" stroke="#000"/>
<rect x="576" y="380" width="3" height="23" fill="#000"/>
<line x1="581.5" y1="399" x2="581.5" y2="407" stroke="#000"/>
<rect x="580.5" y="401.5" width="2" height="1" fill="#fff" stroke="#000"/>
<line x1="585.5" y1="398" x2="585.5" y2="419" stroke="#000"/>
<rect x="584" y="399" width="3" height="19" fill="#000"/>
<line x1="589.5" y1="409" x2="589.5" y2="424" stroke="#000"/>
<rect x="588" y="415" width="3" height="2" fill="#000"/>
<line x1="593.5" y1="364" x2="593.5" y2="416" stroke="#000"/>
<rect x="592.5" y="370.5" width="2" height="45" fill="#fff" stroke="#000"/>
<line x1="597.5" y1="335" x2="597.5" y2="372" stroke="#000"/>
<rect x="596.5" y="360.5" width="2" height="8" fill="#fff" stroke="#000"/>
<line x1="601.5" y1="352" x2="601.5" y2="379" stroke="#000"/>
<rect x="600" y="359" width="3" height="6" fill="#000"/>
<line x1="605.5" y1="341" x2="605.5" y2="366" stroke="#000"/>
<rect x="604.5" y="346.5" width="2" height="19" fill="#fff" stroke="#000"/>
<line x1="609.5" y1="341" x2="609.5" y2="370" stroke="#000"/>
<rect x="608" y="346" width="3" height="22" fill="#000"/>
<line x1="613.5" y1="335" x2="613.5" y2="388" stroke="#000"/>
<rect x="612.5" y="341.5" width="2" height="24" fill="#fff" stroke="#000"/>
<line x1="617.5" y1="332" x2="617.5" y2="365" stroke="#000"/>
<rect x="616.5" y="334.5" width="2" height="10" fill="#fff" stroke="#000"/>
<line x1="621.5" y1="300" x2="621.5" y2="346" stroke="#000"/>
<rect x="620.5" y="307.5" width="2" height="29" fill="#fff" stroke="#000"/>
<line x1="625.5" y1="279" x2="625.5" y2="312" stroke="#000"/>
<rect x="624.5" y="285.5" width="2" height="23" fill="#fff" stroke="#000"/>
<line x1="629.5" y1="277" x2="629.5" y2="298" stroke="#000"/>
<rect x="628" y="284" width="3" height="14" fill="#000"/>
<line x1="633.5" y1="259" x2="633.5" y2="299" stroke="#000"/>
<rect x="632.5" y="266.5" width="2" height="31" fill="#fff" stroke="#000"/>
<line x1="637.5" y1="264" x2="637.5" y2="282" stroke="#000"/>
<rect x="636" y="268" width="3" height="10" fill="#000"/>
<line x1="641.5" y1="279" x2="641.5" y2="307" stroke="#000"/>
<rect x="640" y="279" width="3" height="27" fill="#000"/>
<line x1="645.5" y1="297" x2="645.5" y2="310" stroke="#000"/>
<rect x="644" y="302" width="3" height="8" fill="#000"/>
<line x1="649.5" y1="303" x2="649.5" y2="314" stroke="#000"/>
<rect x="648" y="309" width="3" height="2" fill="#000"/>
<line x1="653.5" y1="303" x2="653.5" y2="318" stroke="#000"/>
<rect x="652" y="307" width="3" height="8" fill="#000"/>
<line x1="657.5" y1="311" x2="657.5" y2="325" stroke="#000"/>
<rect x="656" y="312" width="3" height="13" fill="#000"/>
<line x1="661.5" y1="307" x2="661.5" y2="326" stroke="#000"/>
<rect x="660.5" y="312.5" width="2" height="13" fill="#fff" stroke="#000"/>
<line x1="665.5" y1="308" x2="665.5" y2="323" stroke="#000"/>
<rect x="664" y="312" width="3" height="10" fill="#000"/>
<line x1="669.5" y1="312" x2="669.5" y2="400" stroke="#000"/>
<rect x="668" y="323" width="3" height="2" fill="#000"/>
<line x1="673.5" y1="290" x2="673.5" y2="341" stroke="#000"/>
<rect x="672" y="321" width="3" height="5" fill="#000"/>
<line x1="677.5" y1="325" x2="677.5" y2="358" stroke="#000"/>
<rect x="676" y="326" width="3" height="27" fill="#000"/>
<line x1="681.5" y1="346" x2="681.5" y2="377" stroke="#000"/>
<rect x="680" y="353" width="3" height="14" fill="#000"/>
<line x1="685.5" y1="360" x2="685.5" y2="396" stroke="#000"/>
<rect x="684" y="367" width="3" height="12" fill="#000"/>
<line x1="689.5" y1="362" x2="689.5" y2="400" stroke="#000"/>
<rect x="688" y="378" width="3" height="8" fill="#000"/>
<line x1="693.5" y1="365" x2="693.5" y2="391" stroke="#000"/>
<rect x="692.5" y="368.5" width="2" height="17" fill="#fff" stroke="#000"/>
<line x1="697.5" y1="334" x2="697.5" y2="373" stroke="#000"/>
<rect x="696.5" y="352.5" width="2" height="13" fill="#fff" stroke="#000"/>
<line x1="701.5" y1="336" x2="701.5" y2="360" stroke="#000"/>
<rect x="700.5" y="349.5" width="2" height="2" fill="#fff" stroke="#000"/>
<line x1="705.5" y1="329" x2="705.5" y2="370" stroke="#000"/>
<rect x="704.5" y="344.5" width="2" height="7" fill="#fff" stroke="#000"/>
<line x1="709.5" y1="336" x2="709.5" y2="439" stroke="#000"/>
<rect x="708" y="341" width="3" height="97" fill="#000"/>
<line x1="713.5" y1="424" x2="713.5" y2="478" stroke="#000"/>
<rect x="712" y="434" width="3" height="43" fill="#000"/>
<line x1="717.5" y1="475" x2="717.5" y2="513" stroke="#000"/>
<rect x="716" y="477" width="3" height="35" fill="#000"/>
<line x1="721.5" y1="482" x2="721.5" y2="526" stroke="#000"/>
<rect x="720.5" y="490.5" width="2" height="22" fill="#fff" stroke="#000"/>
<line x1="725.5" y1="467" x2="725.5" y2="508" stroke="#000"/>
<rect x="724.5" y="470.5" width="2" height="21" fill="#fff" stroke="#000"/>
<line x1="729.5" y1="471" x2="729.5" y2="501" stroke="#000"/>
<rect x="728" y="472" width="3" height="29" fill="#000"/>
<line x1="733.5" y1="477" x2="733.5" y2="500" stroke="#000"/>
<rect x="732" y="478" width="3" height="3" fill="#000"/>
<line x1="737.5" y1="484" x2="737.5" y2="501" stroke="#000"/>
<rect x="736.5" y="487.5" width="2" height="11" fill="#fff" stroke="#000"/>
<line x1="741.5" y1="481" x2="741.5" y2="493" stroke="#000"/>
<rect x="740" y="485" width="3" height="8" fill="#000"/>
<line x1="745.5" y1="486" x2="745.5" y2="496" stroke="#000"/>
<rect x="744" y="490" width="3" height="6" fill="#000"/>
<line x1="749.5" y1="495" x2="749.5" y2="517" stroke="#000"/>
<rect x="748" y="496" width="3" height="6" fill="#000"/>
<line x1="753.5" y1="478" x2="753.5" y2="503" stroke="#000"/>
<rect x="752.5" y="480.5" width="2" height="21" fill="#fff" stroke="#000"/>
<line x1="757.5" y1="467" x2="757.5" y2="485" stroke="#000"/>
<rect x="756" y="478" width="3" height="7" fill="#000"/>
<line x1="761.5" y1="464" x2="761.5" y2="485" stroke="#000"/>
<rect x="760.5" y="465.5" width="2" height="19" fill="#fff" stroke="#000"/>
<line x1="765.5" y1="455" x2="765.5" y2="465" stroke="#000"/>
<rect x="764.5" y="459.5" width="2" height="3" fill="#fff" stroke="#000"/>
<line x1="769.5" y1="456" x2="769.5" y2="469" stroke="#000"/>
<rect x="768" y="460" width="3" height="2" fill="#000"/>
<line x1="773.5" y1="456" x2="773.5" y2="472" stroke="#000"/>
<rect x="772" y="460" width="3" height="5" fill="#000"/>
<line x1="777.5" y1="455" x2="777.5" y2="469" stroke="#000"/>
<rect x="776.5" y="459.5" width="2" height="2" fill="#fff" stroke="#000"/>
<line x1="781.5" y1="455" x2="781.5" y2="470" stroke="#000"/>
<rect x="780" y="460" width="3" height="7" fill="#000"/>
<line x1="785.5" y1="441" x2="785.5" y2="469" stroke="#000"/>
<rect x="784.5" y="458.5" width="2" height="9" fill="#fff" stroke="#000"/>
<line x1="789.5" y1="441" x2="789.5" y2="474" stroke="#000"/>
<rect x="788.5" y="445.5" width="2" height="11" fill="#fff" stroke="#000"/>
<line x1="793.5" y1="429" x2="793.5" y2="448" stroke="#000"/>
<rect x="792.5" y="441.5" width="2" height="5" fill="#fff" stroke="#000"/>
<line x1="797.5" y1="424" x2="797.5" y2="444" stroke="#000"/>
<rect x="796.5" y="427.5" width="2" height="13" fill="#fff" stroke="#000"/>
<line x1="801.5" y1="407" x2="801.5" y2="428" stroke="#000"/>
<rect x="800.5" y="409.5" width="2" height="18" fill="#fff" stroke="#000"/>
<line x1="805.5" y1="401" x2="805.5" y2="419" stroke="#000"/>
<rect x="804" y="406" width="3" height="4" fill="#000"/>
<line x1="809.5" y1="367" x2="809.5" y2="412" stroke="#000"/>
<rect x="808.5" y="377.5" width="2" height="29" fill="#fff" stroke="#000"/>
<line x1="813.5" y1="351" x2="813.5" y2="417" stroke="#000"/>
<rect x="812" y="375" width="3" height="14" fill="#000"/>
<line x1="817.5" y1="380" x2="817.5" y2="417" stroke="#000"/>
<rect x="816" y="390" width="3" height="5" fill="#000"/>
<line x1="821.5" y1="370" x2="821.5" y2="399" stroke="#000"/>
<rect x="820.5" y="390.5" width="2" height="6" fill="#fff" stroke="#000"/>
<line x1="825.5" y1="385" x2="825.5" y2="403" stroke="#000"/>
<rect x="824" y="387" width="3" height="12" fill="#000"/>
<line x1="829.5" y1="364" x2="829.5" y2="400" stroke="#000"/>
<rect x="828.5" y="386.5" width="2" height="13" fill="#fff" stroke="#000"/>
<line x1="833.5" y1="376" x2="833.5" y2="389" stroke="#000"/>
<rect x="832.5" y="382.5" width="2" height="3" fill="#fff" stroke="#000"/>
<line x1="837.5" y1="382" x2="837.5" y2="396" stroke="#000"/>
<rect x="836" y="384" width="3" height="12" fill="#000"/>
<line x1="841.5" y1="388" x2="841.5" y2="403" stroke="#000"/>
<rect x="840.5" y="392.5" width="2" height="4" fill="#fff" stroke="#000"/>
<line x1="845.5" y1="374" x2="845.5" y2="396" stroke="#000"/>
<rect x="844.5" y="381.5" width="2" height="14" fill="#fff" stroke="#000"/>
<line x1="849.5" y1="374" x2="849.5" y2="387" stroke="#000"/>
<rect x="848" y="378" width="3" height="5" fill="#000"/>
<line x1="853.5" y1="363" x2="853.5" y2="382" stroke="#000"/>
<rect x="852.5" y="376.5" width="2" height="5" fill="#fff" stroke="#000"/>
<line x1="857.5" y1="368" x2="857.5" y2="381" stroke="#000"/>
<rect x="856" y="377" width="3" height="5" fill="#000"/>
<line x1="861.5" y1="356" x2="861.5" y2="384" stroke="#000"/>
<rect x="860.5" y="365.5" width="2" height="18" fill="#fff" stroke="#000"/>
<line x1="865.5" y1="341" x2="865.5" y2="370" stroke="#000"/>
<rect x="864.5" y="348.5" width="2" height="16" fill="#fff" stroke="#000"/>
<line x1="869.5" y1="341" x2="869.5" y2="369" stroke="#000"/>
<rect x="868" y="346" width="3" height="23" fill="#000"/>
<line x1="873.5" y1="356" x2="873.5" y2="381" stroke="#000"/>
<rect x="872" y="368" width="3" height="6" fill="#000"/>
<line x1="877.5" y1="364" x2="877.5" y2="381" stroke="#000"/>
<rect x="876.5" y="368.5" width="2" height="6" fill="#fff" stroke="#000"/>
<line x1="881.5" y1="343" x2="881.5" y2="378" stroke="#000"/>
<rect x="880.5" y="346.5" width="2" height="22" fill="#fff" stroke="#000"/>
<line x1="885.5" y1="340" x2="885.5" y2="355" stroke="#000"/>
<rect x="884" y="348" width="3" height="4" fill="#000"/>
<line x1="889.5" y1="342" x2="889.5" y2="365" stroke="#000"/>
<rect x="888" y="351" width="3" height="4" fill="#000"/>
<line x1="893.5" y1="335" x2="893.5" y2="355" stroke="#000"/>
<rect x="892.5" y="338.5" width="2" height="14" fill="#fff" stroke="#000"/>
<line x1="897.5" y1="335" x2="897.5" y2="354" stroke="#000"/>
<rect x="896" y="336" width="3" height="19" fill="#000"/>
<line x1="901.5" y1="311" x2="901.5" y2="359" stroke="#000"/>
<rect x="900.5" y="311.5" width="2" height="44" fill="#fff" stroke="#000"/>
<line x1="905.5" y1="306" x2="905.5" y2="338" stroke="#000"/>
<rect x="904" y="312" width="3" height="13" fill="#000"/>
<line x1="909.5" y1="320" x2="909.5" y2="387" stroke="#000"/>
<rect x="908" y="321" width="3" height="49" fill="#000"/>
<line x1="913.5" y1="359" x2="913.5" y2="386" stroke="#000"/>
<rect x="912.5" y="360.5" width="2" height="8" fill="#fff" stroke="#000"/>
<line x1="917.5" y1="346" x2="917.5" y2="377" stroke="#000"/>
<rect x="916.5" y="359.5" width="2" height="3" fill="#fff" stroke="#000"/>
<line x1="921.5" y1="338" x2="921.5" y2="369" stroke="#000"/>
<rect x="920.5" y="341.5" width="2" height="19" fill="#fff" stroke="#000"/>
<line x1="925.5" y1="336" x2="925.5" y2="360" stroke="#000"/>
<rect x="924" y="340" width="3" height="8" fill="#000"/>
<line x1="929.5" y1="335" x2="929.5" y2="354" stroke="#000"/>
<rect x="928" y="348" width="3" height="5" fill="#000"/>
<line x1="933.5" y1="338" x2="933.5" y2="353" stroke="#000"/>
<rect x="932.5" y="343.5" width="2" height="8" fill="#fff" stroke="#000"/>
<line x1="937.5" y1="329" x2="937.5" y2="349" stroke="#000"/>
<rect x="936.5" y="333.5" width="2" height="13" fill="#fff" stroke="#000"/>
<line x1="941.5" y1="328" x2="941.5" y2="344" stroke="#000"/>
<rect x="940" y="334" width="3" height="11" fill="#000"/>
<line x1="945.5" y1="326" x2="945.5" y2="346" stroke="#000"/>
<rect x="944.5" y="336.5" width="2" height="6" fill="#fff" stroke="#000"/>
<line x1="949.5" y1="312" x2="949.5" y2="334" stroke="#000"/>
<rect x="948.5" y="328.5" width="2" height="6" fill="#fff" stroke="#000"/>
<line x1="953.5" y1="324" x2="953.5" y2="342" stroke="#000"/>
<rect x="952" y="326" width="3" height="9" fill="#000"/>
<line x1="957.5" y1="329" x2="957.5" y2="352" stroke="#000"/>
<rect x="956" y="333" width="3" height="20" fill="#000"/>
<line x1="961.5" y1="346" x2="961.5" y2="354" stroke="#000"/>
<rect x="960" y="350" width="3" height="2" fill="#000"/>
<line x1="965.5" y1="341" x2="965.5" y2="354" stroke="#000"/>
<rect x="964" y="348" width="3" height="5" fill="#000"/>
<line x1="969.5" y1="323" x2="969.5" y2="354" stroke="#000"/>
<rect x="968.5" y="340.5" width="2" height="13" fill="#fff" stroke="#000"/>
<line x1="973.5" y1="334" x2="973.5" y2="363" stroke="#000"/>
<rect x="972" y="338" width="3" height="26" fill="#000"/>
<line x1="977.5" y1="336" x2="977.5" y2="367" stroke="#000"/>
<rect x="976.5" y="360.5" width="2" height="3" fill="#fff" stroke="#000"/>
<line x1="981.5" y1="341" x2="981.5" y2="366" stroke="#000"/>
<rect x="980.5" y="343.5" width="2" height="15" fill="#fff" stroke="#000"/>
<line x1="985.5" y1="318" x2="985.5" y2="346" stroke="#000"/>
<rect x="984.5" y="321.5" width="2" height="24" fill="#fff" stroke="#000"/>
<line x1="989.5" y1="319" x2="989.5" y2="336" stroke="#000"/>
<rect x="988" y="323" width="3" height="12" fill="#000"/>
<line x1="993.5" y1="314" x2="993.5" y2="356" stroke="#000"/>
<rect x="992.5" y="314.5" width="2" height="19" fill="#fff" stroke="#000"/>
<line x1="997.5" y1="245" x2="997.5" y2="329" stroke="#000"/>
<rect x="996.5" y="280.5" width="2" height="36" fill="#fff" stroke="#000"/>
<line x1="1001.5" y1="177" x2="1001.5" y2="284" stroke="#000"/>
<rect x="1000.5" y="196.5" width="2" height="85" fill="#fff" stroke="#000"/>
<line x1="1005.5" y1="130" x2="1005.5" y2="196" stroke="#000"/>
<rect x="1004.5" y="159.5" width="2" height="35" fill="#fff" stroke="#000"/>
<path d="M1010.5 154 L1004 159.5 L1010.5 165 Z" fill="#fffbe8" stroke="#d0c080" stroke-width="1.2" shape-rendering="auto"/>
<path d="M9 106 L16 106 L12.5 111 Z" fill="#000"/>
<text x="20" y="113" font-size="10" letter-spacing="-0.45" fill="#000">EURUSD,H1</text><text x="80" y="113" font-size="10" letter-spacing="-0.45" fill="#000">1.1006 1.1044 1.1006 1.1025</text>
<text x="12" y="151" font-size="10" letter-spacing="-0.4" word-spacing="1.2" fill="#111">#98582973 sell 0.20</text>
<text x="12" y="241" font-size="10" letter-spacing="-0.4" word-spacing="1.2" fill="#111">#98566921 sell 0.12</text>
<text x="12" y="267" font-size="10" letter-spacing="-0.4" word-spacing="1.2" fill="#111">#98566998 sell 0.04</text>
<text x="12.5" y="267.5" font-size="10" letter-spacing="-0.4" word-spacing="1.2" fill="#111">#98566993 sell 0.12</text>
<text x="12" y="558" font-size="10" letter-spacing="-0.4" word-spacing="1.2" fill="#111">#98636000 buy limit 0.09</text>
<text x="-3" y="241.5" font-size="23" fill="#dd22dd" shape-rendering="auto">210</text>
<text x="107" y="242.7" font-size="24" fill="#dd22dd" shape-rendering="auto">нет</text>
<text x="200" y="270" font-size="24" fill="#dd22dd" shape-rendering="auto">нет</text>
<text x="284" y="297" font-size="24" fill="#dd22dd" shape-rendering="auto">нет</text>
<text x="384" y="346" font-size="24" fill="#dd22dd" shape-rendering="auto">нет</text>
<text x="603" y="232" font-size="22" fill="#dd22dd" shape-rendering="auto">8</text>
<text x="478.6" y="268" font-size="19" fill="#dd22dd" shape-rendering="auto">38 день</text>
<text x="476.5" y="334.5" font-size="19" fill="#dd22dd" shape-rendering="auto">1.0977</text>
<text x="562" y="333.8" font-size="22.5" fill="#dd22dd" shape-rendering="auto">1,103</text>
<text x="-4.9" y="377.6" font-size="23" fill="#dd22dd" shape-rendering="auto">0933</text>
<text x="544" y="491.5" font-size="23.5" fill="#dd22dd" shape-rendering="auto">25 в день</text>
<text x="766" y="228.5" font-size="15.5" fill="#2a2acc">1,0948</text>
<text x="861" y="228" font-size="15.5" fill="#2a2acc">нет</text>
<text x="854" y="238" font-size="15.5" fill="#2a2acc">1,095</text>
<text x="765" y="268" font-size="15.5" fill="#2a2acc">сдулся</text>
<text x="305" y="601" font-size="20" fill="#2a2acc">11</text>
<text x="395" y="593" font-size="20" fill="#2a2acc">10</text>
<text x="500" y="598" font-size="20" fill="#2a2acc">9</text>
<text x="588" y="598" font-size="20" fill="#2a2acc">8</text>
<text x="683" y="606" font-size="20" fill="#2a2acc">7</text>
<g stroke="#e02020" stroke-width="4" fill="none" stroke-linecap="round" shape-rendering="auto"><path d="M945 139 L966 156 L982 141"/><path d="M1016 226 L1033 243 L1054 229"/><path d="M1052 255 L1066 270 L1080 256"/></g>
<g stroke="#e02020" stroke-width="3.5" fill="none" stroke-linecap="round" shape-rendering="auto"><path d="M1138 182 V365"/><path d="M1119 354 L1152 368"/><path d="M1122 379 L1154 351"/></g>
<path d="M1000 102 L1014 102 L1007 108 Z" fill="#b0b8c8"/>
</g>
<line x1="1261" y1="110.5" x2="1265" y2="110.5" stroke="#000"/>
<text x="1266.5" y="114" font-size="10" letter-spacing="-0.45" fill="#000">1.1055</text>
<line x1="1261" y1="144.5" x2="1265" y2="144.5" stroke="#000"/>
<text x="1266.5" y="148" font-size="10" letter-spacing="-0.45" fill="#000">1.1035</text>
<line x1="1261" y1="178.5" x2="1265" y2="178.5" stroke="#000"/>
<text x="1266.5" y="182" font-size="10" letter-spacing="-0.45" fill="#000">1.1015</text>
<line x1="1261" y1="212.5" x2="1265" y2="212.5" stroke="#000"/>
<text x="1266.5" y="216" font-size="10" letter-spacing="-0.45" fill="#000">1.0995</text>
<line x1="1261" y1="246.5" x2="1265" y2="246.5" stroke="#000"/>
<text x="1266.5" y="250" font-size="10" letter-spacing="-0.45" fill="#000">1.0975</text>
<line x1="1261" y1="280.5" x2="1265" y2="280.5" stroke="#000"/>
<text x="1266.5" y="284" font-size="10" letter-spacing="-0.45" fill="#000">1.0955</text>
<line x1="1261" y1="314.5" x2="1265" y2="314.5" stroke="#000"/>
<text x="1266.5" y="318" font-size="10" letter-spacing="-0.45" fill="#000">1.0935</text>
<line x1="1261" y1="348.5" x2="1265" y2="348.5" stroke="#000"/>
<text x="1266.5" y="352" font-size="10" letter-spacing="-0.45" fill="#000">1.0915</text>
<line x1="1261" y1="382.5" x2="1265" y2="382.5" stroke="#000"/>
<text x="1266.5" y="386" font-size="10" letter-spacing="-0.45" fill="#000">1.0895</text>
<line x1="1261" y1="416.5" x2="1265" y2="416.5" stroke="#000"/>
<text x="1266.5" y="420" font-size="10" letter-spacing="-0.45" fill="#000">1.0875</text>
<line x1="1261" y1="450.5" x2="1265" y2="450.5" stroke="#000"/>
<text x="1266.5" y="454" font-size="10" letter-spacing="-0.45" fill="#000">1.0855</text>
<line x1="1261" y1="484.5" x2="1265" y2="484.5" stroke="#000"/>
<text x="1266.5" y="488" font-size="10" letter-spacing="-0.45" fill="#000">1.0835</text>
<line x1="1261" y1="518.5" x2="1265" y2="518.5" stroke="#000"/>
<text x="1266.5" y="522" font-size="10" letter-spacing="-0.45" fill="#000">1.0815</text>
<line x1="1261" y1="552.5" x2="1265" y2="552.5" stroke="#000"/>
<text x="1266.5" y="556" font-size="10" letter-spacing="-0.45" fill="#000">1.0795</text>
<line x1="1261" y1="586.5" x2="1265" y2="586.5" stroke="#000"/>
<text x="1266.5" y="590" font-size="10" letter-spacing="-0.45" fill="#000">1.0775</text>
<rect x="1262" y="115" width="36" height="11" fill="#0000e0"/>
<text x="1266" y="124" font-size="10" letter-spacing="-0.45" fill="#fff">1.1049</text>
<rect x="1262" y="120" width="36" height="11" fill="#0000e0"/>
<text x="1266" y="129" font-size="10" letter-spacing="-0.45" fill="#fff">1.1046</text>
<rect x="1262" y="153" width="36" height="11" fill="#ff4000"/>
<text x="1266" y="162" font-size="10" letter-spacing="-0.45" fill="#fff">1.1027</text>
<rect x="1262" y="156" width="36" height="11" fill="#0000e0"/>
<text x="1266" y="165" font-size="10" letter-spacing="-0.45" fill="#fff">1.1025</text>
<rect x="1262" y="188" width="36" height="11" fill="#0000e0"/>
<text x="1266" y="197" font-size="10" letter-spacing="-0.45" fill="#fff">1.1006</text>
<rect x="1262" y="202" width="36" height="11" fill="#ff0000"/>
<text x="1266" y="211" font-size="10" letter-spacing="-0.45" fill="#fff">1.0998</text>
<rect x="1262" y="238" width="36" height="11" fill="#0000e0"/>
<text x="1266" y="247" font-size="10" letter-spacing="-0.45" fill="#fff">1.0977</text>
<rect x="1262" y="287" width="36" height="11" fill="#0000e0"/>
<text x="1266" y="296" font-size="10" letter-spacing="-0.45" fill="#fff">1.0948</text>
<rect x="1262" y="409" width="36" height="11" fill="#0000e0"/>
<text x="1266" y="418" font-size="10" letter-spacing="-0.45" fill="#fff">1.0876</text>
<rect x="1262" y="442" width="36" height="11" fill="#0000e0"/>
<text x="1266" y="451" font-size="10" letter-spacing="-0.45" fill="#fff">1.0857</text>
<rect x="1262" y="479" width="36" height="11" fill="#0000e0"/>
<text x="1266" y="488" font-size="10" letter-spacing="-0.45" fill="#fff">1.0835</text>
<rect x="1262" y="511" width="36" height="11" fill="#0000e0"/>
<text x="1266" y="520" font-size="10" letter-spacing="-0.45" fill="#fff">1.0816</text>
<rect x="1262" y="555" width="36" height="11" fill="#0000e0"/>
<text x="1266" y="564" font-size="10" letter-spacing="-0.45" fill="#fff">1.0790</text>
<line x1="5.5" y1="595" x2="5.5" y2="599" stroke="#000"/>
<text x="5" y="607" font-size="10" letter-spacing="-0.5" fill="#000">20 Jan 2016</text>
<line x1="69.5" y1="595" x2="69.5" y2="599" stroke="#000"/>
<text x="69" y="607" font-size="10" letter-spacing="-0.5" fill="#000">20 Jan 23:00</text>
<line x1="133.5" y1="595" x2="133.5" y2="599" stroke="#000"/>
<text x="133" y="607" font-size="10" letter-spacing="-0.5" fill="#000">21 Jan 15:00</text>
<line x1="197.5" y1="595" x2="197.5" y2="599" stroke="#000"/>
<text x="197" y="607" font-size="10" letter-spacing="-0.5" fill="#000">22 Jan 07:00</text>
<line x1="261.5" y1="595" x2="261.5" y2="599" stroke="#000"/>
<text x="261" y="607" font-size="10" letter-spacing="-0.5" fill="#000">22</text>
<line x1="325.5" y1="595" x2="325.5" y2="599" stroke="#000"/>
<text x="353" y="607" font-size="10" letter-spacing="-0.5" fill="#000">15:00</text>
<line x1="389.5" y1="595" x2="389.5" y2="599" stroke="#000"/>
<text x="389" y="607" font-size="10" letter-spacing="-0.5" fill="#000">26 Jan 07:00</text>
<line x1="453.5" y1="595" x2="453.5" y2="599" stroke="#000"/>
<text x="453" y="607" font-size="10" letter-spacing="-0.5" fill="#000">26 Jan 23:00</text>
<line x1="517.5" y1="595" x2="517.5" y2="599" stroke="#000"/>
<text x="517" y="607" font-size="10" letter-spacing="-0.5" fill="#000">27 Jan 15:00</text>
<line x1="581.5" y1="595" x2="581.5" y2="599" stroke="#000"/>
<text x="581" y="607" font-size="10" letter-spacing="-0.5" fill="#000">28 Jan 07:00</text>
<line x1="645.5" y1="595" x2="645.5" y2="599" stroke="#000"/>
<text x="645" y="607" font-size="10" letter-spacing="-0.5" fill="#000">28 Jan 23:00</text>
<line x1="709.5" y1="595" x2="709.5" y2="599" stroke="#000"/>
<text x="709" y="607" font-size="10" letter-spacing="-0.5" fill="#000">29 Jan 15:00</text>
<line x1="773.5" y1="595" x2="773.5" y2="599" stroke="#000"/>
<text x="773" y="607" font-size="10" letter-spacing="-0.5" fill="#000">1 Feb 07:00</text>
<line x1="837.5" y1="595" x2="837.5" y2="599" stroke="#000"/>
<text x="837" y="607" font-size="10" letter-spacing="-0.5" fill="#000">1 Feb 23:00</text>
<line x1="901.5" y1="595" x2="901.5" y2="599" stroke="#000"/>
<text x="901" y="607" font-size="10" letter-spacing="-0.5" fill="#000">2 Feb 15:00</text>
<line x1="965.5" y1="595" x2="965.5" y2="599" stroke="#000"/>
<text x="965" y="607" font-size="10" letter-spacing="-0.5" fill="#000">3 Feb 07:00</text>
<rect x="273" y="598" width="80" height="11" fill="#0000d0"/>
<text x="276" y="607" font-size="10" letter-spacing="-0.45" fill="#fff">2016.01.25 12:00</text>
</svg>
<div class="a" style="left:0;top:614px;width:1302px;height:19px;background:#f0f0f0"></div>
<div class="a" style="left:4px;top:613px;width:80px;height:20px;background:#fff;border-left:1px solid #000;border-right:2px solid #000;border-bottom:2px solid #000"></div><div class="a" style="left:1px;top:613px;width:2px;height:20px;background:#707070"></div>
<div class="t" style="left:14px;top:617px;font-size:11px;line-height:13px;color:#000">EURUSD,H1</div>
<div class="t" style="left:94px;top:617px;font-size:11px;line-height:13px;color:#707070">XAGUSDecn,H1</div>
<div class="a" style="left:180px;top:617px;width:1px;height:12px;background:#999"></div>
<div class="t" style="left:190px;top:617px;font-size:11px;line-height:13px;color:#707070">USDJPY,H1</div>
<div class="a" style="left:256px;top:617px;width:1px;height:12px;background:#999"></div>
<div class="t" style="left:266px;top:617px;font-size:11px;line-height:13px;color:#707070">USA500v,H1</div>
<div class="a" style="left:341px;top:617px;width:1px;height:12px;background:#999"></div>
<div class="t" style="left:351px;top:617px;font-size:11px;line-height:13px;color:#707070">EURJPY,H1</div>
<div class="a" style="left:415px;top:617px;width:1px;height:12px;background:#999"></div>
<svg class="a" style="left:1272px;top:618px" width="26" height="12"><path d="M7 2 L3 6 L7 10 Z" fill="#aaa"/><path d="M19 2 L23 6 L19 10 Z" fill="#aaa"/></svg>
<div class="a" style="left:0;top:633px;width:1302px;height:112px;background:#f0f0f0;border-top:2px solid #d8d8d8"></div>
<div class="a" style="left:2px;top:652px;width:11px;height:92px;background:#c9d3e0"></div>
<div class="t" style="left:-39px;top:709px;width:92px;text-align:center;transform:rotate(-90deg);font-size:11.5px;line-height:14px;color:#222">Терминал</div>
<svg class="a" style="left:3px;top:640px" width="8" height="8"><path d="M1.5 1.5 L6.5 6.5 M6.5 1.5 L1.5 6.5" stroke="#111" stroke-width="1.5"/></svg>
<div class="a" style="left:16px;top:638px;width:1282px;height:85px;background:#fff;border-top:1px solid #c8c8c8"></div>
<div class="a" style="left:16px;top:639px;width:1265px;height:24px;background:#fff"></div>
<div class="t" style="left:22px;top:645px;font-size:11px;line-height:13px;color:#222">Ордер</div>
<div class="t" style="left:120px;top:645px;width:172px;text-align:right;font-size:11px;line-height:13px;color:#222">Время</div>
<div class="a" style="left:120px;top:640px;width:1px;height:83px;background:#e0e0e0"></div>
<div class="t" style="left:297px;top:645px;width:76px;text-align:right;font-size:11px;line-height:13px;color:#222">Тип</div>
<div class="a" style="left:297px;top:640px;width:1px;height:83px;background:#e0e0e0"></div>
<div class="t" style="left:378px;top:645px;width:60px;text-align:right;font-size:11px;line-height:13px;color:#222">Объем</div>
<div class="a" style="left:378px;top:640px;width:1px;height:83px;background:#e0e0e0"></div>
<div class="t" style="left:443px;top:645px;width:54px;text-align:right;font-size:11px;line-height:13px;color:#222">Символ</div>
<div class="a" style="left:443px;top:640px;width:1px;height:83px;background:#e0e0e0"></div>
<div class="t" style="left:523px;top:645px;width:76px;text-align:right;font-size:11px;line-height:13px;color:#222">Цена</div>
<div class="a" style="left:523px;top:640px;width:1px;height:83px;background:#e0e0e0"></div>
<div class="t" style="left:604px;top:645px;width:76px;text-align:right;font-size:11px;line-height:13px;color:#222">S / L</div>
<div class="a" style="left:604px;top:640px;width:1px;height:83px;background:#e0e0e0"></div>
<div class="t" style="left:685px;top:645px;width:76px;text-align:right;font-size:11px;line-height:13px;color:#222">T / P</div>
<div class="a" style="left:685px;top:640px;width:1px;height:83px;background:#e0e0e0"></div>
<div class="t" style="left:766px;top:645px;width:174px;text-align:right;font-size:11px;line-height:13px;color:#222">Время</div>
<div class="a" style="left:766px;top:640px;width:1px;height:83px;background:#e0e0e0"></div>
<div class="t" style="left:945px;top:645px;width:75px;text-align:right;font-size:11px;line-height:13px;color:#222">Цена</div>
<div class="a" style="left:945px;top:640px;width:1px;height:83px;background:#e0e0e0"></div>
<div class="t" style="left:1025px;top:645px;width:76px;text-align:right;font-size:11px;line-height:13px;color:#222">Комиссия</div>
<div class="a" style="left:1025px;top:640px;width:1px;height:83px;background:#e0e0e0"></div>
<div class="t" style="left:1106px;top:645px;width:76px;text-align:right;font-size:11px;line-height:13px;color:#222">Своп</div>
<div class="a" style="left:1106px;top:640px;width:1px;height:83px;background:#e0e0e0"></div>
<div class="t" style="left:1187px;top:645px;width:89px;text-align:right;font-size:11px;line-height:13px;color:#222">Прибыль</div>
<div class="a" style="left:1187px;top:640px;width:1px;height:83px;background:#e0e0e0"></div>
<svg class="a" style="left:509px;top:647px" width="6" height="9"><path d="M1 8 L5 1" stroke="#888"/></svg>
<div class="a" style="left:16px;top:663px;width:1265px;height:20px;background:#3399ff"></div>
<svg class="a" style="left:20px;top:666px" width="16" height="16"><path d="M1.5 0.5 H8 L11.5 4 V13.5 H1.5 Z" fill="#f4f4f4" stroke="#555"/><circle cx="11" cy="11.5" r="3.2" fill="#2a8ae0" stroke="#fff" stroke-width="1"/></svg>
<div class="t" style="left:38px;top:667px;font-size:11px;line-height:13px;color:#fff">98636660</div>
<div class="t" style="left:120px;top:667px;width:175px;text-align:right;font-size:11px;line-height:13px;color:#fff">2016.01.29 22:11:43</div>
<div class="t" style="left:297px;top:667px;width:79px;text-align:right;font-size:11px;line-height:13px;color:#fff">buy</div>
<div class="t" style="left:378px;top:667px;width:63px;text-align:right;font-size:11px;line-height:13px;color:#fff">0.10</div>
<div class="t" style="left:443px;top:667px;width:78px;text-align:right;font-size:11px;line-height:13px;color:#fff">eurusd</div>
<div class="t" style="left:523px;top:667px;width:79px;text-align:right;font-size:11px;line-height:13px;color:#fff">1.0836</div>
<div class="t" style="left:604px;top:667px;width:79px;text-align:right;font-size:11px;line-height:13px;color:#fff">1.0450</div>
<div class="t" style="left:685px;top:667px;width:79px;text-align:right;font-size:11px;line-height:13px;color:#fff">0.0000</div>
<div class="t" style="left:766px;top:667px;width:177px;text-align:right;font-size:11px;line-height:13px;color:#fff">2016.02.03 17:20:28</div>
<div class="t" style="left:945px;top:667px;width:78px;text-align:right;font-size:11px;line-height:13px;color:#fff">1.1027</div>
<div class="t" style="left:1025px;top:667px;width:79px;text-align:right;font-size:11px;line-height:13px;color:#fff">0.00</div>
<div class="t" style="left:1106px;top:667px;width:79px;text-align:right;font-size:11px;line-height:13px;color:#fff">-0.54</div>
<div class="t" style="left:1187px;top:667px;width:92px;text-align:right;font-size:11px;line-height:13px;color:#fff">191.00</div>
<div class="a" style="left:120px;top:663px;width:1px;height:20px;background:#5aaeff"></div>
<div class="a" style="left:297px;top:663px;width:1px;height:20px;background:#5aaeff"></div>
<div class="a" style="left:378px;top:663px;width:1px;height:20px;background:#5aaeff"></div>
<div class="a" style="left:443px;top:663px;width:1px;height:20px;background:#5aaeff"></div>
<div class="a" style="left:523px;top:663px;width:1px;height:20px;background:#5aaeff"></div>
<div class="a" style="left:604px;top:663px;width:1px;height:20px;background:#5aaeff"></div>
<div class="a" style="left:685px;top:663px;width:1px;height:20px;background:#5aaeff"></div>
<div class="a" style="left:766px;top:663px;width:1px;height:20px;background:#5aaeff"></div>
<div class="a" style="left:945px;top:663px;width:1px;height:20px;background:#5aaeff"></div>
<div class="a" style="left:1025px;top:663px;width:1px;height:20px;background:#5aaeff"></div>
<div class="a" style="left:1106px;top:663px;width:1px;height:20px;background:#5aaeff"></div>
<div class="a" style="left:1187px;top:663px;width:1px;height:20px;background:#5aaeff"></div>
<div class="a" style="left:16px;top:683px;width:1265px;height:20px;background:#ebebeb"></div>
<svg class="a" style="left:20px;top:686px" width="16" height="16"><path d="M1.5 0.5 H8 L11.5 4 V13.5 H1.5 Z" fill="#f4f4f4" stroke="#555"/><circle cx="11" cy="11.5" r="3.2" fill="#2a8ae0" stroke="#fff" stroke-width="1"/></svg>
<div class="t" style="left:38px;top:687px;font-size:11px;line-height:13px;color:#111">98636805</div>
<div class="t" style="left:120px;top:687px;width:175px;text-align:right;font-size:11px;line-height:13px;color:#111">2016.01.29 22:17:29</div>
<div class="t" style="left:297px;top:687px;width:79px;text-align:right;font-size:11px;line-height:13px;color:#111">buy</div>
<div class="t" style="left:378px;top:687px;width:63px;text-align:right;font-size:11px;line-height:13px;color:#111">0.09</div>
<div class="t" style="left:443px;top:687px;width:78px;text-align:right;font-size:11px;line-height:13px;color:#111">eurusd</div>
<div class="t" style="left:523px;top:687px;width:79px;text-align:right;font-size:11px;line-height:13px;color:#111">1.0837</div>
<div class="t" style="left:604px;top:687px;width:79px;text-align:right;font-size:11px;line-height:13px;color:#111">1.0397</div>
<div class="t" style="left:685px;top:687px;width:79px;text-align:right;font-size:11px;line-height:13px;color:#111">0.0000</div>
<div class="t" style="left:766px;top:687px;width:177px;text-align:right;font-size:11px;line-height:13px;color:#111">2016.02.03 17:20:32</div>
<div class="t" style="left:945px;top:687px;width:78px;text-align:right;font-size:11px;line-height:13px;color:#111">1.1026</div>
<div class="t" style="left:1025px;top:687px;width:79px;text-align:right;font-size:11px;line-height:13px;color:#111">0.00</div>
<div class="t" style="left:1106px;top:687px;width:79px;text-align:right;font-size:11px;line-height:13px;color:#111">-0.48</div>
<div class="t" style="left:1187px;top:687px;width:92px;text-align:right;font-size:11px;line-height:13px;color:#111">170.10</div>
<div class="a" style="left:120px;top:683px;width:1px;height:20px;background:#d8d8d8"></div>
<div class="a" style="left:297px;top:683px;width:1px;height:20px;background:#d8d8d8"></div>
<div class="a" style="left:378px;top:683px;width:1px;height:20px;background:#d8d8d8"></div>
<div class="a" style="left:443px;top:683px;width:1px;height:20px;background:#d8d8d8"></div>
<div class="a" style="left:523px;top:683px;width:1px;height:20px;background:#d8d8d8"></div>
<div class="a" style="left:604px;top:683px;width:1px;height:20px;background:#d8d8d8"></div>
<div class="a" style="left:685px;top:683px;width:1px;height:20px;background:#d8d8d8"></div>
<div class="a" style="left:766px;top:683px;width:1px;height:20px;background:#d8d8d8"></div>
<div class="a" style="left:945px;top:683px;width:1px;height:20px;background:#d8d8d8"></div>
<div class="a" style="left:1025px;top:683px;width:1px;height:20px;background:#d8d8d8"></div>
<div class="a" style="left:1106px;top:683px;width:1px;height:20px;background:#d8d8d8"></div>
<div class="a" style="left:1187px;top:683px;width:1px;height:20px;background:#d8d8d8"></div>
<div class="a" style="left:16px;top:703px;width:1265px;height:20px;background:#ffffff"></div>
<svg class="a" style="left:20px;top:706px" width="16" height="16"><path d="M1.5 0.5 H8 L11.5 4 V13.5 H1.5 Z" fill="#f4f4f4" stroke="#555"/><circle cx="11" cy="11.5" r="3.2" fill="#2a8ae0" stroke="#fff" stroke-width="1"/></svg>
<div class="t" style="left:38px;top:707px;font-size:11px;line-height:13px;color:#111">98636873</div>
<div class="t" style="left:120px;top:707px;width:175px;text-align:right;font-size:11px;line-height:13px;color:#111">2016.01.29 22:23:56</div>
<div class="t" style="left:297px;top:707px;width:79px;text-align:right;font-size:11px;line-height:13px;color:#111">buy</div>
<div class="t" style="left:378px;top:707px;width:63px;text-align:right;font-size:11px;line-height:13px;color:#111">0.08</div>
<div class="t" style="left:443px;top:707px;width:78px;text-align:right;font-size:11px;line-height:13px;color:#111">eurusd</div>
<div class="t" style="left:523px;top:707px;width:79px;text-align:right;font-size:11px;line-height:13px;color:#111">1.0838</div>
<div class="t" style="left:604px;top:707px;width:79px;text-align:right;font-size:11px;line-height:13px;color:#111">1.0380</div>
<div class="t" style="left:685px;top:707px;width:79px;text-align:right;font-size:11px;line-height:13px;color:#111">0.0000</div>
<div class="t" style="left:766px;top:707px;width:177px;text-align:right;font-size:11px;line-height:13px;color:#111">2016.02.03 17:20:36</div>
<div class="t" style="left:945px;top:707px;width:78px;text-align:right;font-size:11px;line-height:13px;color:#111">1.1027</div>
<div class="t" style="left:1025px;top:707px;width:79px;text-align:right;font-size:11px;line-height:13px;color:#111">0.00</div>
<div class="t" style="left:1106px;top:707px;width:79px;text-align:right;font-size:11px;line-height:13px;color:#111">-0.42</div>
<div class="t" style="left:1187px;top:707px;width:92px;text-align:right;font-size:11px;line-height:13px;color:#111">151.20</div>
<div class="a" style="left:120px;top:703px;width:1px;height:20px;background:#d8d8d8"></div>
<div class="a" style="left:297px;top:703px;width:1px;height:20px;background:#d8d8d8"></div>
<div class="a" style="left:378px;top:703px;width:1px;height:20px;background:#d8d8d8"></div>
<div class="a" style="left:443px;top:703px;width:1px;height:20px;background:#d8d8d8"></div>
<div class="a" style="left:523px;top:703px;width:1px;height:20px;background:#d8d8d8"></div>
<div class="a" style="left:604px;top:703px;width:1px;height:20px;background:#d8d8d8"></div>
<div class="a" style="left:685px;top:703px;width:1px;height:20px;background:#d8d8d8"></div>
<div class="a" style="left:766px;top:703px;width:1px;height:20px;background:#d8d8d8"></div>
<div class="a" style="left:945px;top:703px;width:1px;height:20px;background:#d8d8d8"></div>
<div class="a" style="left:1025px;top:703px;width:1px;height:20px;background:#d8d8d8"></div>
<div class="a" style="left:1106px;top:703px;width:1px;height:20px;background:#d8d8d8"></div>
<div class="a" style="left:1187px;top:703px;width:1px;height:20px;background:#d8d8d8"></div>
<div class="a" style="left:1281px;top:639px;width:17px;height:84px;background:#f0f0f0"></div>
<svg class="a" style="left:1284px;top:645px" width="12" height="10"><path d="M2 7 L6 3 L10 7" stroke="#333" stroke-width="1.5" fill="none"/></svg>
<div class="a" style="left:1283px;top:657px;width:14px;height:15px;background:#cdcdcd"></div>
<svg class="a" style="left:1284px;top:709px" width="12" height="10"><path d="M2 3 L6 7 L10 3" stroke="#333" stroke-width="1.5" fill="none"/></svg>
<div class="a" style="left:16px;top:723px;width:1282px;height:19px;background:#f0f0f0;border-top:1px solid #000"></div>
<div class="a" style="left:144px;top:722px;width:97px;height:20px;background:#fff;border-left:1px solid #000;border-right:2px solid #000;border-bottom:2px solid #000"></div>
<div class="t" style="left:27px;top:726px;font-size:11px;line-height:13px;color:#707070">Торговля</div>
<div class="a" style="left:85px;top:726px;width:1px;height:13px;background:#999"></div>
<div class="t" style="left:95px;top:726px;font-size:11px;line-height:13px;color:#707070">Активы</div>
<div class="t" style="left:153px;top:726px;font-size:11px;line-height:13px;color:#000">История Счета</div>
<div class="t" style="left:249px;top:726px;font-size:11px;line-height:13px;color:#707070">Новости<span style="color:#d02020;font-weight:bold;font-size:9px;margin-left:2px">99</span></div>
<div class="a" style="left:314px;top:726px;width:1px;height:13px;background:#999"></div>
<div class="t" style="left:324px;top:726px;font-size:11px;line-height:13px;color:#707070">Алерты</div>
<div class="a" style="left:373px;top:726px;width:1px;height:13px;background:#999"></div>
<div class="t" style="left:382px;top:726px;font-size:11px;line-height:13px;color:#707070">Почта<span style="color:#d02020;font-weight:bold;font-size:9px;margin-left:2px">1</span></div>
<div class="a" style="left:431px;top:726px;width:1px;height:13px;background:#999"></div>
<div class="t" style="left:439px;top:726px;font-size:11px;line-height:13px;color:#707070">Компания</div>
<div class="a" style="left:498px;top:726px;width:1px;height:13px;background:#999"></div>
<div class="t" style="left:509px;top:726px;font-size:11px;line-height:13px;color:#707070">Маркет<span style="color:#d02020;font-weight:bold;font-size:9px;margin-left:2px">54</span></div>
<div class="a" style="left:570px;top:726px;width:1px;height:13px;background:#999"></div>
<div class="t" style="left:580px;top:726px;font-size:11px;line-height:13px;color:#707070">Сигналы</div>
<div class="a" style="left:634px;top:726px;width:1px;height:13px;background:#999"></div>
<div class="t" style="left:643px;top:726px;font-size:11px;line-height:13px;color:#707070">Библиотека</div>
<div class="a" style="left:714px;top:726px;width:1px;height:13px;background:#999"></div>
<div class="t" style="left:723px;top:726px;font-size:11px;line-height:13px;color:#707070">Эксперты</div>
<div class="a" style="left:784px;top:726px;width:1px;height:13px;background:#999"></div>
<div class="t" style="left:794px;top:726px;font-size:11px;line-height:13px;color:#707070">Журнал</div>
<div class="a" style="left:844px;top:726px;width:1px;height:13px;background:#999"></div>
<div class="a" style="left:0;top:745px;width:1302px;height:23px;background:#f0f0f0;border-top:1px solid #c8c8c8"></div>
<div class="t" style="left:2px;top:752px;font-size:11.5px;line-height:13px;color:#111">Для справки, нажмите F1</div>
<div class="a" style="left:577px;top:749px;width:1px;height:18px;background:#c0c0c0"></div>
<div class="a" style="left:692px;top:749px;width:1px;height:18px;background:#c0c0c0"></div>
<div class="a" style="left:794px;top:749px;width:1px;height:18px;background:#c0c0c0"></div>
<div class="a" style="left:865px;top:749px;width:1px;height:18px;background:#c0c0c0"></div>
<div class="a" style="left:936px;top:749px;width:1px;height:18px;background:#c0c0c0"></div>
<div class="a" style="left:1004px;top:749px;width:1px;height:18px;background:#c0c0c0"></div>
<div class="a" style="left:1074px;top:749px;width:1px;height:18px;background:#c0c0c0"></div>
<div class="a" style="left:1140px;top:749px;width:1px;height:18px;background:#c0c0c0"></div>
<div class="t" style="left:582px;top:752px;font-size:11px;line-height:13px;color:#111">Default</div>
<svg class="a" style="left:1146px;top:752px" width="24" height="12"><path d="M1 11 V2 M4 11 V2 M7 11 V2 M10 11 V2 M13 11 V2 M16 11 V2 M19 11 V2 M22 11 V2" stroke="#5a8a20" stroke-width="1.5"/><path d="M1 11 L23 3 V11 Z" fill="#b02020" opacity=".8"/></svg>
<div class="t" style="left:1211px;top:752px;font-size:11px;line-height:13px;color:#111">1398/1 kb</div>
<div class="a" style="left:1302px;top:0;width:64px;height:768px;background:linear-gradient(90deg,rgba(160,90,50,.22),rgba(0,0,0,.08)),linear-gradient(180deg,#54402f 0%,#5e4330 35%,#70482f 65%,#86502e 100%)"></div>
<svg class="a" style="left:1327px;top:7px" width="15" height="15"><path d="M0 2 L6 1 V7 H0 Z M7 1 L15 0 V7 H7 Z M0 8 H6 V14 L0 13 Z M7 8 H15 V15 L7 14 Z" fill="#fff"/></svg>
<div class="a" style="left:1304px;top:31px;width:61px;height:29px;background:rgba(255,255,255,0.15);border:1px solid rgba(255,255,255,0.28)"></div>
<div class="a" style="left:1304px;top:63px;width:61px;height:29px;background:rgba(255,255,255,0.15);border:1px solid rgba(255,255,255,0.28)"></div>
<div class="a" style="left:1304px;top:128px;width:61px;height:29px;background:rgba(255,255,255,0.15);border:1px solid rgba(255,255,255,0.28)"></div>
<div class="a" style="left:1304px;top:160px;width:61px;height:29px;background:rgba(255,255,255,0.28);border:1px solid rgba(255,255,255,0.55)"></div>
<div class="a" style="left:1304px;top:192px;width:61px;height:29px;background:rgba(255,255,255,0.15);border:1px solid rgba(255,255,255,0.28)"></div>
<svg class="a" style="left:1325px;top:37px" width="16" height="18"><rect x="1" y="0.5" width="14" height="17" rx="1" fill="#b8d8f0" stroke="#5a88b8"/><rect x="3" y="2" width="10" height="4" fill="#fff"/><path d="M3 8 H5 M7 8 H9 M11 8 H13 M3 11 H5 M7 11 H9 M11 11 H13 M3 14 H5 M7 14 H9 M11 14 H13" stroke="#3a78b8" stroke-width="1.5"/></svg>
<svg class="a" style="left:1324px;top:70px" width="18" height="16"><path d="M1 2 H7 L9 4 H17 V15 H1 Z" fill="#f2cf6a" stroke="#c8a040"/><rect x="4" y="8" width="10" height="7" fill="#3a9ad8"/></svg>
<svg class="a" style="left:1324px;top:98px" width="19" height="21"><path d="M9.5 1 C15 1 18 4 18 9 C18 14 15 16 10 16 L6 20 V15.5 C3 14.5 1 12 1 9 C1 4 4 1 9.5 1 Z" fill="#7b519d" stroke="#fff" stroke-width="1.3"/><path d="M6.5 5 L8 7 L7 8.5 C8 10 9 11 10.5 11.5 L12 10.5 L14 12 C13.5 13 12.5 13.5 11 13 C8 12 6 10 5.2 7 C5 6 5.5 5.3 6.5 5 Z" fill="#fff"/></svg>
<svg class="a" style="left:1325px;top:134px" width="17" height="17"><circle cx="8.5" cy="8.5" r="8" fill="#db4437"/><path d="M8.5 8.5 L1.6 4.5 A8 8 0 0 0 8.5 16.5 Z" fill="#0f9d58"/><path d="M8.5 8.5 L8.5 16.5 A8 8 0 0 0 16.5 8.5 H8.5 Z" fill="#f4b400"/><circle cx="8.5" cy="8.5" r="3.6" fill="#fff"/><circle cx="8.5" cy="8.5" r="2.8" fill="#4285f4"/></svg>
<svg class="a" style="left:1323px;top:166px" width="20" height="17"><path d="M1 8 L5 11 L9 3 L12 9 L17 7" stroke="#1f5aa0" stroke-width="2.2" fill="none"/><path d="M6 12 L8 15" stroke="#111" stroke-width="2"/></svg>
<svg class="a" style="left:1325px;top:197px" width="17" height="18"><rect x="6" y="1" width="10" height="16" fill="#fff" stroke="#1e7145"/><path d="M8 4 H15 M8 7 H15 M8 10 H15 M8 13 H15 M11 2 V16" stroke="#1e7145" stroke-width=".8"/><path d="M0 2 L10 0.5 V17.5 L0 16 Z" fill="#1e7145"/><path d="M2.5 5 L7 13 M7 5 L2.5 13" stroke="#fff" stroke-width="1.6"/></svg>
<svg class="a" style="left:1311px;top:600px" width="8" height="10"><path d="M6 1 L1 5 L6 9 Z" fill="#fff"/></svg>
<svg class="a" style="left:1309px;top:620px" width="18" height="18"><rect x="2" y="2" width="8" height="12" fill="#aaa" stroke="#777"/><circle cx="12" cy="13" r="4.5" fill="#3a9a3a"/><path d="M10 13 L11.5 14.5 L14 11.5" stroke="#fff" stroke-width="1.3" fill="none"/></svg>
<svg class="a" style="left:1335px;top:621px" width="16" height="16"><path d="M2 1 V15" stroke="#fff" stroke-width="1.6"/><path d="M3 2 H8 L10 4 H14 L12 7 L14 9 H8 L6 8 H3 Z" fill="#fff"/></svg>
<svg class="a" style="left:1309px;top:643px" width="16" height="16"><path d="M2 2 V6 M5 2 V6 M1 6 H6 V9 L3.5 11 V15" stroke="#fff" stroke-width="1.5" fill="none"/><rect x="8.5" y="2.5" width="6" height="12" fill="none" stroke="#fff" stroke-width="1.3"/><rect x="10" y="5" width="3" height="8" fill="#fff"/></svg>
<svg class="a" style="left:1334px;top:647px" width="16" height="12"><path d="M1 11 H3 V9 H1 Z M5 11 H7 V7 H5 Z M9 11 H11 V4 H9 Z M13 11 H15 V1 H13 Z" fill="#fff"/></svg>
<svg class="a" style="left:1309px;top:670px" width="16" height="16"><path d="M2 6 H5 L9 2 V14 L5 10 H2 Z" fill="#fff"/><path d="M11 5 Q13 8 11 11 M13 3 Q16 8 13 13" stroke="#fff" stroke-width="1.2" fill="none"/></svg>
<div class="t" style="left:1302px;top:699px;width:64px;text-align:center;font-size:12px;line-height:15px;color:#fff">РУС</div>
<div class="t" style="left:1302px;top:727px;width:64px;text-align:center;font-size:11.3px;line-height:15px;color:#fff">18:25</div>
<div class="t" style="left:1302px;top:743px;width:64px;text-align:center;font-size:11.3px;line-height:15px;color:#fff">03.02.2016</div></body></html>
